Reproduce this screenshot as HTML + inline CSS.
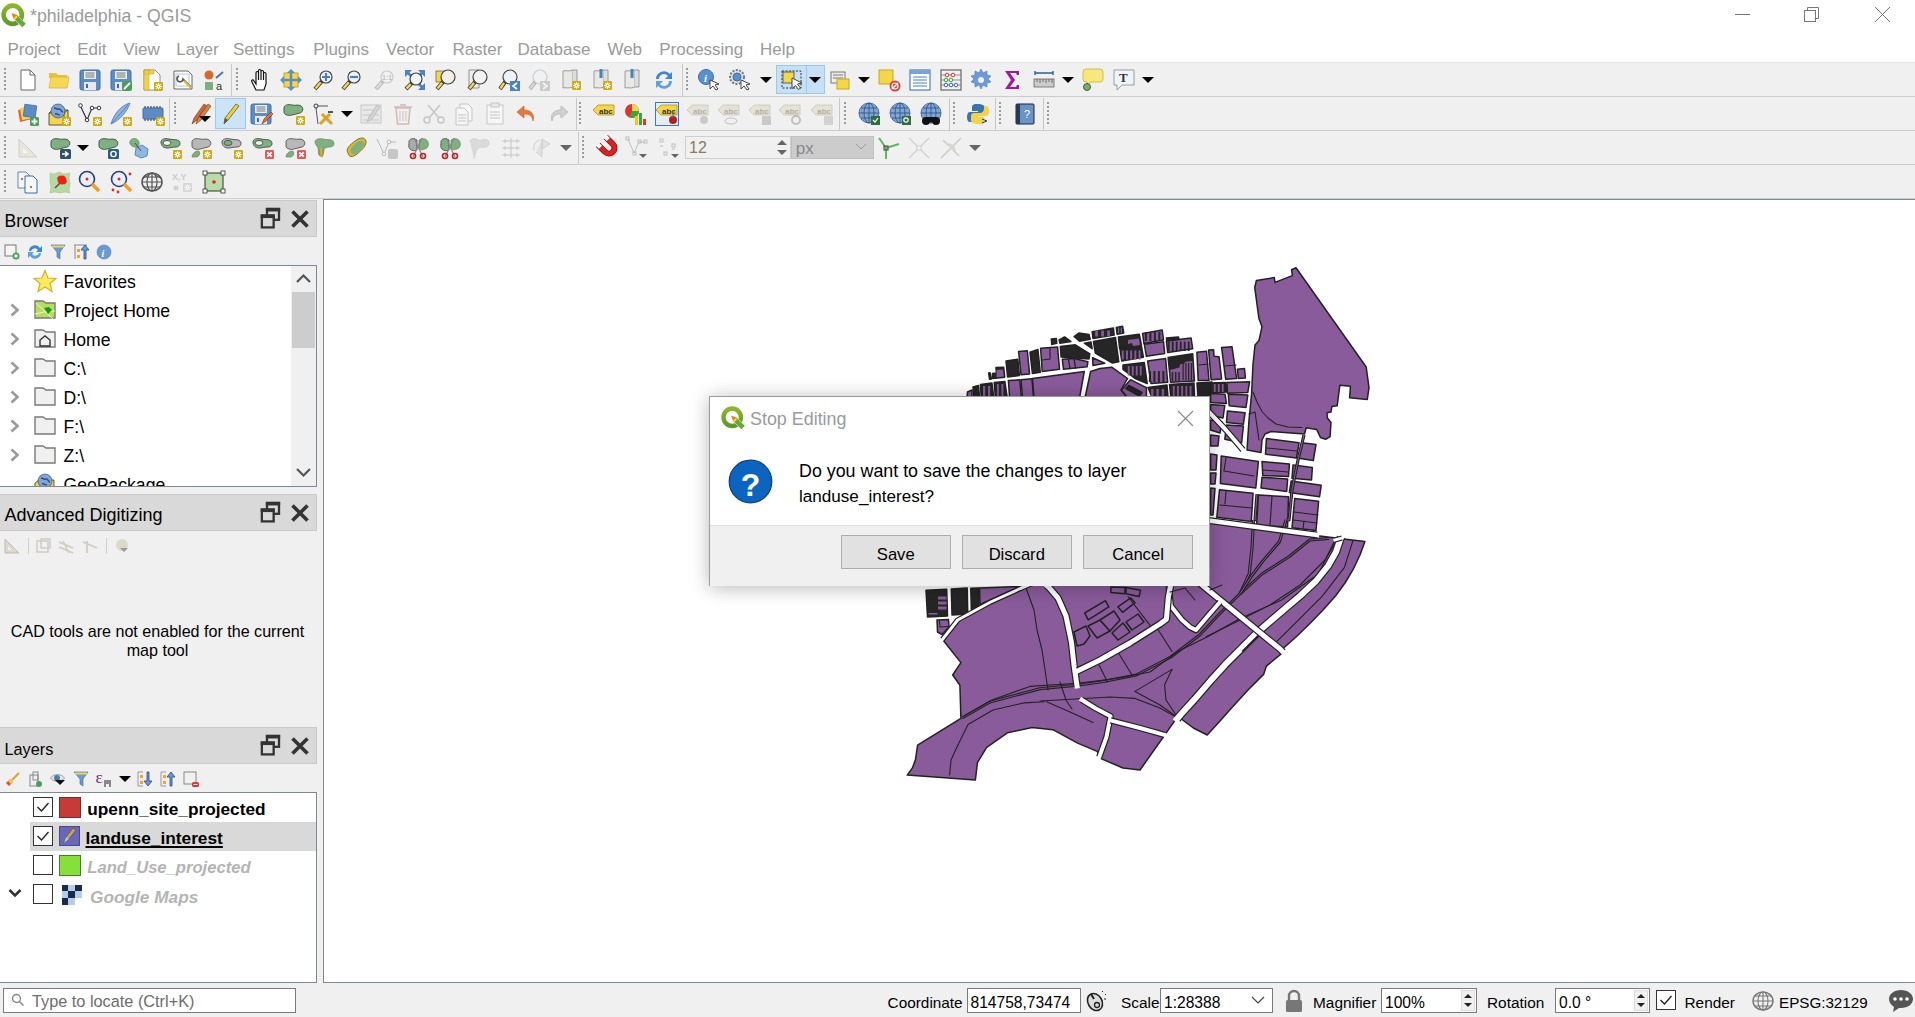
<!DOCTYPE html>
<html><head><meta charset="utf-8"><style>
html,body{margin:0;padding:0;width:1915px;height:1017px;overflow:hidden;background:#f0f0f0;font-family:"Liberation Sans", sans-serif}
.t{position:absolute;white-space:nowrap;font-family:"Liberation Sans", sans-serif}
svg{overflow:visible}
</style></head><body>
<div style="position:absolute;left:0px;top:0px;width:1915px;height:62px;background:#fff"></div><div style="position:absolute;left:0px;top:62px;width:1915px;height:1px;background:#e6e6e6"></div><svg style="position:absolute;left:1px;top:3px" width="24" height="24" viewBox="0 0 24 24"><defs><linearGradient id="qg" x1="0" y1="0" x2="0" y2="1"><stop offset="0" stop-color="#8db62a"/><stop offset="1" stop-color="#5c9a2c"/></linearGradient></defs><circle cx="11.7" cy="11.75" r="9.1" fill="none" stroke="url(#qg)" stroke-width="4.6"/><path d="M17.27 13.23L24.77 20.73L21.23 24.27L13.73 16.77z" fill="#6aa83c" stroke="#fff" stroke-width="1"/><path d="M17.27 13.23L24.77 20.73L21.23 24.27L13.73 16.77z" fill="#6aa83c"/><path d="M10.5 10L16.02 11.98L12.48 15.52z M16.02 11.98L17.5 13.2L13.8 16.9L12.48 15.52z" fill="#f07a1c"/><path d="M15.3 12.7L16.6 14L13.4 17.2L12.1 15.9z" fill="#f3e23c"/></svg><div class="t" style="left:30px;top:7.52px;font-size:17.7px;line-height:17.7px;color:#9a9a9a;">*philadelphia - QGIS</div><div style="position:absolute;left:1735px;top:14px;width:15px;height:1px;background:#777"></div><svg style="position:absolute;left:1803px;top:6px" width="17" height="17" viewBox="0 0 17 17"><rect x="1.5" y="4.5" width="11" height="11" fill="none" stroke="#777"/><path d="M4.5 4.5v-3h11v11h-3" fill="none" stroke="#777"/></svg><svg style="position:absolute;left:1874px;top:6px" width="17" height="17" viewBox="0 0 17 17"><path d="M1 1l15 15M16 1L1 16" stroke="#777" stroke-width="1"/></svg><div class="t menu" style="left:7.5px;top:40.61px;font-size:17px;line-height:17px;color:#9a9a9a">Project</div><div class="t menu" style="left:77.2px;top:40.61px;font-size:17px;line-height:17px;color:#9a9a9a">Edit</div><div class="t menu" style="left:123.3px;top:40.61px;font-size:17px;line-height:17px;color:#9a9a9a">View</div><div class="t menu" style="left:176.2px;top:40.61px;font-size:17px;line-height:17px;color:#9a9a9a">Layer</div><div class="t menu" style="left:233px;top:40.61px;font-size:17px;line-height:17px;color:#9a9a9a">Settings</div><div class="t menu" style="left:313.3px;top:40.61px;font-size:17px;line-height:17px;color:#9a9a9a">Plugins</div><div class="t menu" style="left:386px;top:40.61px;font-size:17px;line-height:17px;color:#9a9a9a">Vector</div><div class="t menu" style="left:452.4px;top:40.61px;font-size:17px;line-height:17px;color:#9a9a9a">Raster</div><div class="t menu" style="left:517.6px;top:40.61px;font-size:17px;line-height:17px;color:#9a9a9a">Database</div><div class="t menu" style="left:607.4px;top:40.61px;font-size:17px;line-height:17px;color:#9a9a9a">Web</div><div class="t menu" style="left:659.2px;top:40.61px;font-size:17px;line-height:17px;color:#9a9a9a">Processing</div><div class="t menu" style="left:760px;top:40.61px;font-size:17px;line-height:17px;color:#9a9a9a">Help</div><div style="position:absolute;left:0px;top:63px;width:1915px;height:136px;background:#f0f0f0"></div><div style="position:absolute;left:0px;top:96px;width:1915px;height:1px;background:#cbcbcb"></div><div style="position:absolute;left:0px;top:130px;width:1915px;height:1px;background:#cbcbcb"></div><div style="position:absolute;left:0px;top:164px;width:1915px;height:1px;background:#cbcbcb"></div><div style="position:absolute;left:0px;top:198px;width:1915px;height:1px;background:#d0d0d0"></div><div style="position:absolute;left:3.5px;top:68px;width:2px;height:24px;background:repeating-linear-gradient(#9a9a9a 0 2px, transparent 2px 4px)"></div><svg style="position:absolute;left:15.600000000000001px;top:68.0px" width="24" height="24" viewBox="0 0 24 24"><path d="M5 2h9l5 5v15H5z" fill="#fff" stroke="#666" stroke-width="1"/><path d="M14 2v5h5" fill="none" stroke="#666"/></svg><svg style="position:absolute;left:46.6px;top:68.0px" width="24" height="24" viewBox="0 0 24 24"><path d="M2 5h7l2 2h9v3H2z" fill="#e8c23a"/><path d="M2 20l2-11h18l-2 11z" fill="#f7d854" stroke="#d9b530" stroke-width="0.8"/></svg><svg style="position:absolute;left:77.9px;top:68.0px" width="24" height="24" viewBox="0 0 24 24"><rect x="2" y="2" width="20" height="20" rx="2" fill="#5b8cc8" stroke="#3f6ea6"/><rect x="6" y="3" width="12" height="8" fill="#eef0f3"/><path d="M7.5 5h9M7.5 7h9M7.5 9h9" stroke="#555" stroke-width="0.8"/><rect x="6" y="14" width="12" height="8" fill="#e6e9ee"/><rect x="8" y="16" width="2" height="4" fill="#3f6ea6"/></svg><svg style="position:absolute;left:109.2px;top:68.0px" width="24" height="24" viewBox="0 0 24 24"><rect x="2" y="2" width="20" height="20" rx="2" fill="#5b8cc8" stroke="#3f6ea6"/><rect x="6" y="3" width="12" height="8" fill="#eef0f3"/><path d="M7.5 5h9M7.5 7h9M7.5 9h9" stroke="#555" stroke-width="0.8"/><rect x="6" y="14" width="12" height="8" fill="#e6e9ee"/><rect x="8" y="16" width="2" height="4" fill="#3f6ea6"/><rect x="13" y="13" width="10" height="10" rx="2" fill="#4e9a5a"/><path d="M15 21l6-6" stroke="#fff" stroke-width="1.8"/></svg><svg style="position:absolute;left:140.0px;top:68.0px" width="24" height="24" viewBox="0 0 24 24"><path d="M4 2h11l5 5v15H4z" fill="#fff" stroke="#777" stroke-width="0.8"/><path d="M4 2h5v20H4zM4 2h10v4H4z" fill="#f3d04a" stroke="#c9a81a" stroke-width="0.6"/><rect x="14" y="14" width="9" height="9" rx="1.2" fill="#d4a90f"/><path d="M18.5 15.2V21.8M15.2 18.5H21.8M16.2 16.2L20.8 20.8M20.8 16.2L16.2 20.8" stroke="#fff" stroke-width="1.1"/><circle cx="18.5" cy="18.5" r="1.9" fill="#fff"/><circle cx="18.5" cy="18.5" r="0.8" fill="#d4a90f"/></svg><svg style="position:absolute;left:171.3px;top:68.0px" width="24" height="24" viewBox="0 0 24 24"><path d="M3 3h14l4 4v14H3z" fill="#fff" stroke="#555" stroke-width="0.9"/><rect x="5" y="6" width="13" height="12" fill="none" stroke="#9bb4e8" stroke-width="0.8"/><path d="M8 8a3 3 0 1 0 4 3l8 8" stroke="#555" stroke-width="1.6" fill="none"/><path d="M13 13l7 7" stroke="#e0c040" stroke-width="2.2"/></svg><svg style="position:absolute;left:202.0px;top:68.0px" width="24" height="24" viewBox="0 0 24 24"><circle cx="7" cy="7" r="4.5" fill="#d9672e"/><path d="M14 10l7-6" stroke="#4a76b8" stroke-width="2"/><rect x="3" y="14" width="8" height="8" fill="#79b07e"/><text x="14" y="22" font-family="Liberation Sans" font-size="11" fill="#333">a</text></svg><div style="position:absolute;left:231px;top:64px;width:1px;height:32px;background:#c8c8c8"></div><div style="position:absolute;left:236px;top:68px;width:2px;height:24px;background:repeating-linear-gradient(#9a9a9a 0 2px, transparent 2px 4px)"></div><svg style="position:absolute;left:249.0px;top:68.0px" width="24" height="24" viewBox="0 0 24 24"><path d="M7 22l-4-8c-1-2 1-3 2-1l2 3V5c0-2 2.5-2 2.5 0v7V3c0-2 2.5-2 2.5 0v9V4c0-2 2.5-2 2.5 0v8V6c0-2 2.5-2 2.5 0v10l-2 6z" fill="#fff" stroke="#111" stroke-width="1.2"/></svg><svg style="position:absolute;left:279.4px;top:68.0px" width="24" height="24" viewBox="0 0 24 24"><rect x="5" y="5" width="14" height="14" fill="#f5d64a" stroke="#c9a81a"/><path d="M12 1l4 4h-8zM12 23l4-4h-8zM1 12l4-4v8zM23 12l-4-4v8z" fill="#5b8fc7"/><path d="M12 4v16M4 12h16" stroke="#5b8fc7" stroke-width="2.5"/></svg><svg style="position:absolute;left:312.0px;top:68.0px" width="24" height="24" viewBox="0 0 24 24"><path d="M9.8 13.2L3 21" stroke="#333" stroke-width="4"/><path d="M8.8 14.2L3.5 20.5" stroke="#f5d64a" stroke-width="2.5"/><circle cx="14" cy="9" r="6" fill="#eef3f8" stroke="#444" stroke-width="1.2"/><path d="M14 5v8M10 9h8" stroke="#4a7fc1" stroke-width="2.2"/></svg><svg style="position:absolute;left:340.4px;top:68.0px" width="24" height="24" viewBox="0 0 24 24"><path d="M9.8 13.2L3 21" stroke="#333" stroke-width="4"/><path d="M8.8 14.2L3.5 20.5" stroke="#f5d64a" stroke-width="2.5"/><circle cx="14" cy="9" r="6" fill="#eef3f8" stroke="#444" stroke-width="1.2"/><path d="M10 9h8" stroke="#4a7fc1" stroke-width="2.2"/></svg><svg style="position:absolute;left:373.0px;top:68.0px" width="24" height="24" viewBox="0 0 24 24"><g opacity="0.35"><path d="M9.8 13.2L3 21" stroke="#333" stroke-width="4"/><path d="M8.8 14.2L3.5 20.5" stroke="#bbb" stroke-width="2.5"/><circle cx="14" cy="9" r="6" fill="#eef3f8" stroke="#888" stroke-width="1.2"/><text x="9" y="12" font-family="Liberation Sans" font-size="7" font-weight="bold" fill="#666">1:1</text></g></svg><svg style="position:absolute;left:403.0px;top:68.0px" width="24" height="24" viewBox="0 0 24 24"><path d="M2 2h7L2 9zM22 2h-7l7 7zM22 22h-7l7-7z" fill="#4a82c6"/><path d="M3 3l5 5M21 3l-5 5M21 21l-5-5" stroke="#4a82c6" stroke-width="2.5"/><path d="M8.8 15.2L3 21" stroke="#333" stroke-width="4"/><path d="M7.800000000000001 16.2L3.5 20.5" stroke="#f5d64a" stroke-width="2.5"/><circle cx="13" cy="11" r="6" fill="#eef3f8" stroke="#444" stroke-width="1.2"/></svg><svg style="position:absolute;left:434.4px;top:68.0px" width="24" height="24" viewBox="0 0 24 24"><rect x="2" y="3" width="10" height="11" fill="#f5d64a" stroke="#444" stroke-width="0.6"/><path d="M9.100000000000001 13.899999999999999L3 21" stroke="#333" stroke-width="4"/><path d="M8.100000000000001 14.899999999999999L3.5 20.5" stroke="#f5d64a" stroke-width="2.5"/><circle cx="14" cy="9" r="7" fill="#f1efe4" stroke="#444" stroke-width="1.2"/></svg><svg style="position:absolute;left:465.8px;top:68.0px" width="24" height="24" viewBox="0 0 24 24"><path d="M3 2h10v18H3z" fill="#eee" stroke="#777" stroke-width="0.8"/><path d="M9.100000000000001 13.899999999999999L3 21" stroke="#333" stroke-width="4"/><path d="M8.100000000000001 14.899999999999999L3.5 20.5" stroke="#f5d64a" stroke-width="2.5"/><circle cx="14" cy="9" r="7" fill="#f3f3f3" stroke="#444" stroke-width="1.2"/></svg><svg style="position:absolute;left:497.0px;top:68.0px" width="24" height="24" viewBox="0 0 24 24"><path d="M8.100000000000001 13.899999999999999L3 21" stroke="#333" stroke-width="4"/><path d="M7.100000000000001 14.899999999999999L3.5 20.5" stroke="#f5d64a" stroke-width="2.5"/><circle cx="13" cy="9" r="7" fill="#eef3f8" stroke="#444" stroke-width="1.2"/><rect x="13" y="13" width="10" height="10" fill="#4a82c6"/><path d="M20 15l-4 3 4 3" stroke="#fff" stroke-width="1.6" fill="none"/></svg><svg style="position:absolute;left:526.8px;top:68.0px" width="24" height="24" viewBox="0 0 24 24"><g opacity="0.35"><path d="M8.100000000000001 13.899999999999999L3 21" stroke="#333" stroke-width="4"/><path d="M7.100000000000001 14.899999999999999L3.5 20.5" stroke="#aaa" stroke-width="2.5"/><circle cx="13" cy="9" r="7" fill="#eef3f8" stroke="#888" stroke-width="1.2"/><rect x="13" y="13" width="10" height="10" fill="#888"/><path d="M16 15l4 3-4 3" stroke="#fff" stroke-width="1.6" fill="none"/></g></svg><svg style="position:absolute;left:559.0px;top:68.0px" width="24" height="24" viewBox="0 0 24 24"><path d="M4 3c3-1 5 1 10-1v17c-5 2-7 0-10 1z" fill="#e8e8e4" stroke="#888" stroke-width="0.8"/><path d="M14 2h4v17h-4" fill="#ddd" stroke="#888" stroke-width="0.8"/><rect x="13" y="13" width="9" height="9" rx="1.2" fill="#d4a90f"/><path d="M17.5 14.2V20.8M14.2 17.5H20.8M15.2 15.2L19.8 19.8M19.8 15.2L15.2 19.8" stroke="#fff" stroke-width="1.1"/><circle cx="17.5" cy="17.5" r="1.9" fill="#fff"/><circle cx="17.5" cy="17.5" r="0.8" fill="#d4a90f"/></svg><svg style="position:absolute;left:590.3px;top:68.0px" width="24" height="24" viewBox="0 0 24 24"><path d="M4 3c3-1 5 1 10-1v17c-5 2-7 0-10 1z" fill="#e8e8e4" stroke="#888" stroke-width="0.8"/><path d="M14 2h4v17h-4" fill="#ddd" stroke="#888" stroke-width="0.8"/><path d="M11 1v9" stroke="#4a7fc1" stroke-width="3"/><rect x="13" y="13" width="9" height="9" rx="1.2" fill="#d4a90f"/><path d="M17.5 14.2V20.8M14.2 17.5H20.8M15.2 15.2L19.8 19.8M19.8 15.2L15.2 19.8" stroke="#fff" stroke-width="1.1"/><circle cx="17.5" cy="17.5" r="1.9" fill="#fff"/><circle cx="17.5" cy="17.5" r="0.8" fill="#d4a90f"/></svg><svg style="position:absolute;left:620.7px;top:68.0px" width="24" height="24" viewBox="0 0 24 24"><path d="M4 3c3-1 5 1 10-1v17c-5 2-7 0-10 1z" fill="#e8e8e4" stroke="#888" stroke-width="0.8"/><path d="M14 2h4v17h-4" fill="#ddd" stroke="#888" stroke-width="0.8"/><path d="M11 1v9" stroke="#4a7fc1" stroke-width="3"/></svg><svg style="position:absolute;left:652.0px;top:68.0px" width="24" height="24" viewBox="0 0 24 24"><path d="M4 11a8 8 0 0 1 14-5l2-2v7h-7l3-3a5 5 0 0 0-9 3z" fill="#3f86d0"/><path d="M20 13a8 8 0 0 1-14 5l-2 2v-7h7l-3 3a5 5 0 0 0 9-3z" fill="#5fa0e0"/></svg><div style="position:absolute;left:681.6px;top:64px;width:1px;height:32px;background:#c8c8c8"></div><div style="position:absolute;left:686px;top:68px;width:2px;height:24px;background:repeating-linear-gradient(#9a9a9a 0 2px, transparent 2px 4px)"></div><div style="position:absolute;left:776px;top:65px;width:49px;height:29px;background:#c6e0f5;border:1px solid #99c9ef;box-sizing:border-box"></div><div style="position:absolute;left:806px;top:66px;width:1px;height:27px;background:#99c9ef"></div><svg style="position:absolute;left:696.8px;top:68.0px" width="24" height="24" viewBox="0 0 24 24"><circle cx="9" cy="9" r="7.5" fill="#5a8fd0" stroke="#3a6fb0"/><text x="7" y="13.5" font-family="Liberation Serif" font-style="italic" font-weight="bold" font-size="11" fill="#fff">i</text><path d="M13 12l9 4-4 1 3 4-2 1-3-4-3 3z" fill="#fff" stroke="#333" stroke-width="0.9"/></svg><svg style="position:absolute;left:728.0px;top:68.0px" width="24" height="24" viewBox="0 0 24 24"><circle cx="9" cy="9" r="7" fill="#ddd" stroke="#777" stroke-width="2" stroke-dasharray="2 1.5"/><circle cx="9" cy="9" r="4" fill="#5a8fd0" stroke="#3a6fb0"/><path d="M13 12l9 4-4 1 3 4-2 1-3-4-3 3z" fill="#fff" stroke="#333" stroke-width="0.9"/></svg><svg style="position:absolute;left:779.8px;top:68.0px" width="24" height="24" viewBox="0 0 24 24"><rect x="2" y="3" width="19" height="17" fill="none" stroke="#333" stroke-width="1" stroke-dasharray="2 1.5"/><rect x="3" y="4" width="11" height="11" fill="#f5d64a" stroke="#555" stroke-width="0.9"/><path d="M12 10l10 5-4.5 1 3 4-2 1.5-3-4-3.5 3z" fill="#fff" stroke="#333" stroke-width="0.9"/></svg><svg style="position:absolute;left:827.8px;top:68.0px" width="24" height="24" viewBox="0 0 24 24"><rect x="3" y="4" width="14" height="11" fill="#eee" stroke="#777"/><path d="M5 7h10M5 10h10" stroke="#777"/><rect x="9" y="11" width="12" height="10" fill="#f5d64a" stroke="#c9a81a"/></svg><svg style="position:absolute;left:877.0px;top:68.0px" width="24" height="24" viewBox="0 0 24 24"><rect x="2" y="2" width="14" height="14" fill="#f5d64a" stroke="#c9a81a"/><circle cx="18" cy="18" r="5.5" fill="#e03c3c"/><path d="M15 21l6-6" stroke="#fff" stroke-width="1.5"/><circle cx="18" cy="18" r="3" fill="none" stroke="#fff" stroke-width="1.2"/></svg><svg style="position:absolute;left:907.6px;top:68.0px" width="24" height="24" viewBox="0 0 24 24"><rect x="2" y="2" width="20" height="20" fill="#fff" stroke="#4a7fc1" stroke-width="1.2"/><rect x="2" y="2" width="20" height="4" fill="#7aa4d8"/><path d="M5 9h14M5 12h14M5 15h14M5 18h14" stroke="#4a7fc1" stroke-width="1"/></svg><svg style="position:absolute;left:939.0px;top:68.0px" width="24" height="24" viewBox="0 0 24 24"><rect x="2" y="2" width="20" height="20" fill="none" stroke="#666" stroke-width="1.2"/><path d="M2 7h20M2 12h20M2 17h20" stroke="#777" stroke-width="0.8"/><circle cx="8" cy="7" r="1.8" fill="#fff" stroke="#d33"/><circle cx="14" cy="7" r="1.8" fill="#fff" stroke="#d33"/><circle cx="7" cy="12" r="1.8" fill="#fff" stroke="#3a3"/><circle cx="12" cy="12" r="1.8" fill="#fff" stroke="#3a3"/><circle cx="7" cy="17" r="1.8" fill="#fff" stroke="#36c"/><circle cx="12" cy="17" r="1.8" fill="#fff" stroke="#36c"/><circle cx="17" cy="17" r="1.8" fill="#fff" stroke="#36c"/></svg><svg style="position:absolute;left:969.4px;top:68.0px" width="24" height="24" viewBox="0 0 24 24"><path d="M12 1l2 4 4-2 0 4 4 1-3 3 3 3-4 1v4l-4-2-2 4-2-4-4 2v-4l-4-1 3-3-3-3 4-1V3l4 2z" fill="#6c9ad6" stroke="#4a7ab8" stroke-width="0.6"/><circle cx="12" cy="12" r="3" fill="#f0f0f0"/></svg><svg style="position:absolute;left:1000.0px;top:68.0px" width="24" height="24" viewBox="0 0 24 24"><path d="M5 3h14v4h-2l-1-2H10l5 7-5 7h6l1-2h2v4H5l6-9z" fill="#a01aa6"/></svg><svg style="position:absolute;left:1032.0px;top:68.0px" width="24" height="24" viewBox="0 0 24 24"><path d="M3 5h18M3 3v4M21 3v4" stroke="#2f5f8f" stroke-width="1.4"/><rect x="2" y="11" width="20" height="8" fill="#ccc" stroke="#666" stroke-width="0.8"/><path d="M5 11v3M8 11v4M11 11v3M14 11v4M17 11v3M20 11v4" stroke="#555" stroke-width="0.8"/></svg><svg style="position:absolute;left:1080.6px;top:68.0px" width="24" height="24" viewBox="0 0 24 24"><path d="M2 4a3 3 0 0 1 3-3h14a3 3 0 0 1 3 3v7a3 3 0 0 1-3 3H10l-4 4v-4H5a3 3 0 0 1-3-3z" fill="#f8e77a" stroke="#c9b030" stroke-width="0.8"/><circle cx="6" cy="19" r="3.5" fill="#7aad6f" stroke="#3a6a30"/></svg><svg style="position:absolute;left:1112.0px;top:68.0px" width="24" height="24" viewBox="0 0 24 24"><path d="M2 2h20v15H10l-5 5v-5H2z" fill="#eef4f8" stroke="#888" stroke-width="0.8"/><text x="7" y="14" font-family="Liberation Serif" font-weight="bold" font-size="13" fill="#333">T</text></svg><svg style="position:absolute;left:760px;top:76px" width="12" height="8"><path d="M0 1h12L6 7z" fill="#000"/></svg><svg style="position:absolute;left:809.3px;top:76px" width="12" height="8"><path d="M0 1h12L6 7z" fill="#000"/></svg><svg style="position:absolute;left:858px;top:76px" width="12" height="8"><path d="M0 1h12L6 7z" fill="#000"/></svg><svg style="position:absolute;left:1062px;top:76px" width="12" height="8"><path d="M0 1h12L6 7z" fill="#000"/></svg><svg style="position:absolute;left:1142.3px;top:76px" width="12" height="8"><path d="M0 1h12L6 7z" fill="#000"/></svg><div style="position:absolute;left:3.5px;top:102px;width:2px;height:24px;background:repeating-linear-gradient(#9a9a9a 0 2px, transparent 2px 4px)"></div><svg style="position:absolute;left:16.2px;top:102.0px" width="24" height="24" viewBox="0 0 24 24"><path d="M2 8l12-3 2 12-12 3z" fill="#d9672e"/><path d="M4 6l12-2 2 12-12 2z" fill="#f5d64a"/><path d="M8 3l12 0v12H8z" fill="#5b8cc8" stroke="#3f6ea6" stroke-width="0.8" transform="rotate(8 14 9)"/><rect x="14" y="15" width="9" height="9" rx="1.5" fill="#4e9a5a"/><path d="M18.5 16.5v6M15.5 19.5h6" stroke="#fff" stroke-width="1.8"/></svg><svg style="position:absolute;left:46.9px;top:102.0px" width="24" height="24" viewBox="0 0 24 24"><path d="M2 11l4-3h15v12l-4 3H2z" fill="#f5d64a" stroke="#333" stroke-width="0.8"/><path d="M2 11h15v12" fill="none" stroke="#333" stroke-width="0.8"/><path d="M17 11l4-3" stroke="#333" stroke-width="0.8"/><circle cx="11" cy="9" r="7" fill="#7ea6d6" stroke="#335" stroke-width="0.6"/><path d="M7 6c2 0 3 2 5 1s2 3 4 3M8 12c2-1 3 1 5 1" stroke="#2f4f7f" stroke-width="1.4" fill="none"/><rect x="15" y="15" width="9" height="9" rx="1.2" fill="#d4a90f"/><path d="M19.5 16.2V22.8M16.2 19.5H22.8M17.2 17.2L21.8 21.8M21.8 17.2L17.2 21.8" stroke="#fff" stroke-width="1.1"/><circle cx="19.5" cy="19.5" r="1.9" fill="#fff"/><circle cx="19.5" cy="19.5" r="0.8" fill="#d4a90f"/></svg><svg style="position:absolute;left:78.0px;top:102.0px" width="24" height="24" viewBox="0 0 24 24"><path d="M2 3l7 15 5-12 7 0" fill="none" stroke="#334" stroke-width="1.2"/><circle cx="2.5" cy="3.5" r="1.8" fill="#fff" stroke="#334"/><circle cx="9" cy="18" r="1.8" fill="#fff" stroke="#334"/><circle cx="14" cy="6" r="1.8" fill="#fff" stroke="#334"/><circle cx="21" cy="6" r="1.8" fill="#fff" stroke="#334"/><rect x="15" y="15" width="9" height="9" rx="1.2" fill="#d4a90f"/><path d="M19.5 16.2V22.8M16.2 19.5H22.8M17.2 17.2L21.8 21.8M21.8 17.2L17.2 21.8" stroke="#fff" stroke-width="1.1"/><circle cx="19.5" cy="19.5" r="1.9" fill="#fff"/><circle cx="19.5" cy="19.5" r="0.8" fill="#d4a90f"/></svg><svg style="position:absolute;left:108.0px;top:102.0px" width="24" height="24" viewBox="0 0 24 24"><path d="M3 22C6 12 12 4 22 1 19 10 12 18 3 22z" fill="#8fb3e0" stroke="#4a76b8" stroke-width="0.8"/><path d="M3 22L20 3" stroke="#4a76b8" stroke-width="0.8"/><rect x="15" y="15" width="9" height="9" rx="1.2" fill="#d4a90f"/><path d="M19.5 16.2V22.8M16.2 19.5H22.8M17.2 17.2L21.8 21.8M21.8 17.2L17.2 21.8" stroke="#fff" stroke-width="1.1"/><circle cx="19.5" cy="19.5" r="1.9" fill="#fff"/><circle cx="19.5" cy="19.5" r="0.8" fill="#d4a90f"/></svg><svg style="position:absolute;left:140.9px;top:102.0px" width="24" height="24" viewBox="0 0 24 24"><rect x="2" y="6" width="20" height="11" rx="1" fill="#5b8cc8" stroke="#3f6ea6"/><path d="M4 4v2M7 4v2M10 4v2M13 4v2M16 4v2M19 4v2M4 17v2M7 17v2M10 17v2M13 17v2M16 17v2M19 17v2" stroke="#333" stroke-width="1"/><rect x="15" y="15" width="9" height="9" rx="1.2" fill="#d4a90f"/><path d="M19.5 16.2V22.8M16.2 19.5H22.8M17.2 17.2L21.8 21.8M21.8 17.2L17.2 21.8" stroke="#fff" stroke-width="1.1"/><circle cx="19.5" cy="19.5" r="1.9" fill="#fff"/><circle cx="19.5" cy="19.5" r="0.8" fill="#d4a90f"/></svg><div style="position:absolute;left:169.2px;top:98px;width:1px;height:32px;background:#c8c8c8"></div><div style="position:absolute;left:174px;top:102px;width:2px;height:24px;background:repeating-linear-gradient(#9a9a9a 0 2px, transparent 2px 4px)"></div><div style="position:absolute;left:215px;top:98px;width:31px;height:31px;background:#cce4f7;border:1px solid #99c9ef;box-sizing:border-box"></div><svg style="position:absolute;left:187.6px;top:102.0px" width="24" height="24" viewBox="0 0 24 24"><path d="M4 22l2-6 10-14 3 2-10 14z" fill="#c96a3a" stroke="#6a3a1a" stroke-width="0.6"/><path d="M8 22l2-6 10-14 3 2-10 14z" fill="#e08040" stroke="#6a3a1a" stroke-width="0.6"/></svg><svg style="position:absolute;left:218.3px;top:102.0px" width="24" height="24" viewBox="0 0 24 24"><path d="M6 22l1-6 11-14 3 2-11 14z" fill="#f0cf40" stroke="#6a5a1a" stroke-width="0.8"/><path d="M6 22l1-6 3 2z" fill="#555"/></svg><svg style="position:absolute;left:249.0px;top:102.0px" width="24" height="24" viewBox="0 0 24 24"><rect x="2" y="2" width="20" height="20" rx="2" fill="#5b8cc8" stroke="#3f6ea6"/><rect x="6" y="3" width="12" height="8" fill="#eef0f3"/><path d="M7.5 5h9M7.5 7h9M7.5 9h9" stroke="#555" stroke-width="0.8"/><rect x="6" y="14" width="12" height="8" fill="#e6e9ee"/><rect x="8" y="16" width="2" height="4" fill="#3f6ea6"/><path d="M13 22l2-5 7-7 2 2-7 7z" fill="#e07030" stroke="#633" stroke-width="0.6"/></svg><svg style="position:absolute;left:280.9px;top:102.0px" width="24" height="24" viewBox="0 0 24 24"><path d="M3 6c0-3 4-4 8-3s6-1 9 1 2 6-1 7-5 1-8 2-8 0-8-3z" fill="#7fb07f" stroke="#4a5a4a" stroke-width="1" /><rect x="15" y="14" width="9" height="9" rx="1.2" fill="#d4a90f"/><path d="M19.5 15.2V21.8M16.2 18.5H22.8M17.2 16.2L21.8 20.8M21.8 16.2L17.2 20.8" stroke="#fff" stroke-width="1.1"/><circle cx="19.5" cy="18.5" r="1.9" fill="#fff"/><circle cx="19.5" cy="18.5" r="0.8" fill="#d4a90f"/></svg><svg style="position:absolute;left:310.7px;top:102.0px" width="24" height="24" viewBox="0 0 24 24"><circle cx="5" cy="4" r="2" fill="none" stroke="#333"/><path d="M7 4h10M5 6l2 16" stroke="#555" stroke-width="1"/><path d="M9 22l10-10M11 12l10 10" stroke="#e0a020" stroke-width="3"/><path d="M17 10h5" stroke="#555" stroke-width="2"/></svg><svg style="position:absolute;left:359.2px;top:102.0px" width="24" height="24" viewBox="0 0 24 24"><g opacity="0.4"><rect x="2" y="3" width="20" height="18" fill="#ddd" stroke="#888"/><path d="M4 8h16M4 13h16M4 18h16" stroke="#888"/><path d="M8 20l2-5 8-12 3 2-8 12z" fill="#aaa" stroke="#777"/></g></svg><svg style="position:absolute;left:390.6px;top:102.0px" width="24" height="24" viewBox="0 0 24 24"><g opacity="0.4"><path d="M5 6h14l-1.5 16h-11z" fill="none" stroke="#a66" stroke-width="1.5"/><path d="M3 5h18M9 3h6" stroke="#a66" stroke-width="1.5"/><path d="M9 9v10M12 9v10M15 9v10" stroke="#a66"/></g></svg><svg style="position:absolute;left:421.9px;top:102.0px" width="24" height="24" viewBox="0 0 24 24"><g opacity="0.4"><circle cx="5" cy="18" r="3" fill="none" stroke="#888" stroke-width="1.5"/><circle cx="19" cy="18" r="3" fill="none" stroke="#888" stroke-width="1.5"/><path d="M7 16L18 3M17 16L6 3" stroke="#888" stroke-width="1.5"/></g></svg><svg style="position:absolute;left:451.7px;top:102.0px" width="24" height="24" viewBox="0 0 24 24"><g opacity="0.4"><path d="M8 2h8l4 4v13H8z" fill="#fff" stroke="#888"/><path d="M4 6h8l4 4v13H4z" fill="#fff" stroke="#888"/><path d="M6 13h8M6 16h8M6 19h8" stroke="#888"/></g></svg><svg style="position:absolute;left:483.0px;top:102.0px" width="24" height="24" viewBox="0 0 24 24"><g opacity="0.4"><rect x="4" y="3" width="16" height="19" fill="#fff" stroke="#888"/><rect x="8" y="1" width="8" height="4" fill="#ddd" stroke="#888"/><path d="M7 10h10M7 13h10M7 16h10" stroke="#888"/></g></svg><svg style="position:absolute;left:515.0px;top:102.0px" width="24" height="24" viewBox="0 0 24 24"><path d="M9 4L2 10l7 6v-4c5 0 8 1 9 7 2-7-2-11-9-11z" fill="#e8793a" stroke="#b85a20" stroke-width="0.6"/></svg><svg style="position:absolute;left:545.6px;top:102.0px" width="24" height="24" viewBox="0 0 24 24"><g opacity="0.35"><path d="M15 4l7 6-7 6v-4c-5 0-8 1-9 7-2-7 2-11 9-11z" fill="#999" stroke="#555" stroke-width="0.9"/></g></svg><svg style="position:absolute;left:199px;top:115px" width="12" height="8"><path d="M0 1h12L6 7z" fill="#000"/></svg><svg style="position:absolute;left:341px;top:110px" width="12" height="8"><path d="M0 1h12L6 7z" fill="#000"/></svg><div style="position:absolute;left:575.7px;top:98px;width:1px;height:32px;background:#c8c8c8"></div><div style="position:absolute;left:579.4px;top:102px;width:2px;height:24px;background:repeating-linear-gradient(#9a9a9a 0 2px, transparent 2px 4px)"></div><svg style="position:absolute;left:591.9px;top:102.0px" width="24" height="24" viewBox="0 0 24 24"><g><path d="M1 8l5-5h16v10H6z" fill="#f5d64a" stroke="#b09020" stroke-width="0.8"/><text x="7" y="11.5" font-family="Liberation Sans" font-weight="bold" font-size="8" fill="#333">abc</text></g></svg><svg style="position:absolute;left:623.2px;top:102.0px" width="24" height="24" viewBox="0 0 24 24"><circle cx="9" cy="9" r="7" fill="#d33"/><path d="M9 9V2a7 7 0 0 1 7 7z" fill="#f5d64a"/><path d="M9 9h7a7 7 0 0 1-10 6z" fill="#3a3"/><rect x="12" y="14" width="3" height="9" fill="#f5c030"/><rect x="16" y="11" width="3" height="12" fill="#3a3"/><rect x="20" y="17" width="3" height="6" fill="#d33"/></svg><svg style="position:absolute;left:654.5px;top:102.0px" width="24" height="24" viewBox="0 0 24 24"><rect x="0.5" y="0.5" width="23" height="23" fill="#e5eef8" stroke="#3a78d8" stroke-width="1"/><g><path d="M1 8l5-5h16v10H6z" fill="#f5d64a" stroke="#b09020" stroke-width="0.8"/><text x="7" y="11.5" font-family="Liberation Sans" font-weight="bold" font-size="8" fill="#333">abc</text><circle cx="18" cy="18" r="4" fill="#b02020"/><path d="M18 8v8" stroke="#666"/></g></svg><svg style="position:absolute;left:685.8px;top:102.0px" width="24" height="24" viewBox="0 0 24 24"><g><path d="M1 8l5-5h16v10H6z" fill="#e4e2d8" stroke="#c8c6b8" stroke-width="0.8"/><text x="7" y="11.5" font-family="Liberation Sans" font-weight="bold" font-size="8" fill="#b0b0a8">abc</text><g opacity="0.45"><circle cx="18" cy="18" r="4" fill="#999"/></g></g></svg><svg style="position:absolute;left:717.2px;top:102.0px" width="24" height="24" viewBox="0 0 24 24"><g><path d="M1 8l5-5h16v10H6z" fill="#e4e2d8" stroke="#c8c6b8" stroke-width="0.8"/><text x="7" y="11.5" font-family="Liberation Sans" font-weight="bold" font-size="8" fill="#b0b0a8">abc</text><g opacity="0.45"><ellipse cx="14" cy="19" rx="6" ry="3" fill="none" stroke="#888"/></g></g></svg><svg style="position:absolute;left:747.6px;top:102.0px" width="24" height="24" viewBox="0 0 24 24"><g><path d="M1 8l5-5h16v10H6z" fill="#e4e2d8" stroke="#c8c6b8" stroke-width="0.8"/><text x="7" y="11.5" font-family="Liberation Sans" font-weight="bold" font-size="8" fill="#b0b0a8">abc</text><g opacity="0.45"><rect x="14" y="14" width="9" height="9" fill="#999"/></g></g></svg><svg style="position:absolute;left:778.3px;top:102.0px" width="24" height="24" viewBox="0 0 24 24"><g><path d="M1 8l5-5h16v10H6z" fill="#e4e2d8" stroke="#c8c6b8" stroke-width="0.8"/><text x="7" y="11.5" font-family="Liberation Sans" font-weight="bold" font-size="8" fill="#b0b0a8">abc</text><g opacity="0.45"><circle cx="18" cy="18" r="4" fill="none" stroke="#888" stroke-width="2"/></g></g></svg><svg style="position:absolute;left:809.6px;top:102.0px" width="24" height="24" viewBox="0 0 24 24"><g><path d="M1 8l5-5h16v10H6z" fill="#e4e2d8" stroke="#c8c6b8" stroke-width="0.8"/><text x="7" y="11.5" font-family="Liberation Sans" font-weight="bold" font-size="8" fill="#b0b0a8">abc</text><g opacity="0.45"><rect x="14" y="14" width="9" height="9" fill="#aaa"/></g></g></svg><div style="position:absolute;left:838.8px;top:98px;width:1px;height:32px;background:#c8c8c8"></div><div style="position:absolute;left:844px;top:102px;width:2px;height:24px;background:repeating-linear-gradient(#9a9a9a 0 2px, transparent 2px 4px)"></div><svg style="position:absolute;left:856.6px;top:102.0px" width="24" height="24" viewBox="0 0 24 24"><circle cx="12" cy="11" r="10" fill="#7ea6d6" stroke="#3a5a8a" stroke-width="0.8"/><path d="M2 11h20M12 1v20M4 6h16M4 16h16" stroke="#2f4f7f" stroke-width="0.8" fill="none"/><ellipse cx="12" cy="11" rx="5" ry="10" fill="none" stroke="#2f4f7f" stroke-width="0.8"/><rect x="14" y="14" width="9" height="9" fill="#2e6e3e"/><path d="M16 18l2 2 3-4" stroke="#fff" fill="none" stroke-width="1.2"/></svg><svg style="position:absolute;left:888.0px;top:102.0px" width="24" height="24" viewBox="0 0 24 24"><circle cx="12" cy="11" r="10" fill="#7ea6d6" stroke="#3a5a8a" stroke-width="0.8"/><path d="M2 11h20M12 1v20M4 6h16M4 16h16" stroke="#2f4f7f" stroke-width="0.8" fill="none"/><ellipse cx="12" cy="11" rx="5" ry="10" fill="none" stroke="#2f4f7f" stroke-width="0.8"/><rect x="14" y="14" width="9" height="9" fill="#2e6e3e"/><circle cx="18" cy="18" r="2.2" fill="none" stroke="#fff" stroke-width="1.2"/></svg><svg style="position:absolute;left:919.2px;top:102.0px" width="24" height="24" viewBox="0 0 24 24"><circle cx="12" cy="11" r="10" fill="#7ea6d6" stroke="#3a5a8a" stroke-width="0.8"/><path d="M2 11h20M12 1v20M4 6h16M4 16h16" stroke="#2f4f7f" stroke-width="0.8" fill="none"/><ellipse cx="12" cy="11" rx="5" ry="10" fill="none" stroke="#2f4f7f" stroke-width="0.8"/><circle cx="7" cy="19" r="4" fill="#111"/><circle cx="17" cy="19" r="4" fill="#111"/><rect x="7" y="15" width="10" height="5" fill="#111"/></svg><div style="position:absolute;left:948.5px;top:98px;width:1px;height:32px;background:#c8c8c8"></div><div style="position:absolute;left:953px;top:102px;width:2px;height:24px;background:repeating-linear-gradient(#9a9a9a 0 2px, transparent 2px 4px)"></div><svg style="position:absolute;left:966.2px;top:102.0px" width="24" height="24" viewBox="0 0 24 24"><path d="M11 2c-5 0-5 2-5 4v3h6v1H4c-2 0-3 2-3 5s1 5 3 5h2v-3c0-2 2-4 4-4h6c2 0 3-1 3-3V6c0-2-2-4-8-4z" fill="#3a74b0"/><path d="M13 22c5 0 5-2 5-4v-3h-6v-1h8c2 0 3-2 3-5s-1-5-3-5h-2v3c0 2-2 4-4 4H8c-2 0-3 1-3 3v4c0 2 2 4 8 4z" fill="#f7d04a"/><path d="M16 17l5 2-5 2" stroke="#333" fill="none" stroke-width="1"/></svg><div style="position:absolute;left:994.8px;top:98px;width:1px;height:32px;background:#c8c8c8"></div><div style="position:absolute;left:999.2px;top:102px;width:2px;height:24px;background:repeating-linear-gradient(#9a9a9a 0 2px, transparent 2px 4px)"></div><svg style="position:absolute;left:1013.2px;top:102.0px" width="24" height="24" viewBox="0 0 24 24"><rect x="3" y="2" width="18" height="20" rx="1" fill="#6a93c8" stroke="#223" stroke-width="1"/><rect x="3" y="2" width="4" height="20" fill="#223a55"/><text x="11" y="16" font-family="Liberation Sans" font-size="11" fill="#fff">?</text></svg><div style="position:absolute;left:1042.5px;top:98px;width:1px;height:32px;background:#c8c8c8"></div><div style="position:absolute;left:1046.8px;top:102px;width:2px;height:24px;background:repeating-linear-gradient(#9a9a9a 0 2px, transparent 2px 4px)"></div><div style="position:absolute;left:3.5px;top:136px;width:2px;height:24px;background:repeating-linear-gradient(#9a9a9a 0 2px, transparent 2px 4px)"></div><svg style="position:absolute;left:15.600000000000001px;top:136.0px" width="24" height="24" viewBox="0 0 24 24"><g opacity="0.45"><path d="M3 21V3l18 18z" fill="#ddd6c8" stroke="#b0a890" stroke-width="1"/><path d="M7 17v-5l5 5z" fill="#fff"/></g></svg><svg style="position:absolute;left:47.5px;top:136.0px" width="24" height="24" viewBox="0 0 24 24"><path d="M3 6c0-3 4-4 8-3s6-1 9 1 2 6-1 7-5 1-8 2-8 0-8-3z" fill="#7fb07f" stroke="#4a5a4a" stroke-width="1" /><rect x="12" y="13" width="11" height="10" rx="1.5" fill="#2f4f6f"/><path d="M14 18h5M17 15.5l3 2.5-3 2.5" stroke="#fff" stroke-width="1.6" fill="none"/></svg><svg style="position:absolute;left:96.0px;top:136.0px" width="24" height="24" viewBox="0 0 24 24"><path d="M3 6c0-3 4-4 8-3s6-1 9 1 2 6-1 7-5 1-8 2-8 0-8-3z" fill="#7fb07f" stroke="#4a5a4a" stroke-width="1" /><rect x="12" y="13" width="11" height="10" rx="1.5" fill="#2f5a7f"/><circle cx="17.5" cy="18" r="2.6" fill="none" stroke="#fff" stroke-width="1.4"/></svg><svg style="position:absolute;left:127.4px;top:136.0px" width="24" height="24" viewBox="0 0 24 24"><path d="M3 5c2-4 8-3 9 1s-2 6-5 5-5-3-4-6z" fill="#7fb07f" stroke="#5a7a5a" stroke-width="0.6"/><path d="M9 12l6-3 6 4-1 7-6 2-6-3z" fill="#8fb8e0" stroke="#4a76a0" stroke-width="0.8"/><path d="M8 7l6 8" stroke="#333" stroke-width="0.8"/></svg><svg style="position:absolute;left:158.7px;top:136.0px" width="24" height="24" viewBox="0 0 24 24"><path d="M2 6c0-3 4-4 8-3s8 0 10 2 1 6-3 6-6 1-9 1-6-2-6-6z" fill="#7fb07f" stroke="#4a5a4a" stroke-width="1"/><ellipse cx="8" cy="7" rx="4" ry="2.5" fill="#f0f0f0" stroke="#4a5a4a" stroke-width="1"/><rect x="14" y="14" width="9" height="9" rx="1.2" fill="#d4a90f"/><path d="M18.5 15.2V21.8M15.2 18.5H21.8M16.2 16.2L20.8 20.8M20.8 16.2L16.2 20.8" stroke="#fff" stroke-width="1.1"/><circle cx="18.5" cy="18.5" r="1.9" fill="#fff"/><circle cx="18.5" cy="18.5" r="0.8" fill="#d4a90f"/></svg><svg style="position:absolute;left:189.4px;top:136.0px" width="24" height="24" viewBox="0 0 24 24"><path d="M3 6c0-3 4-4 8-3s6-1 9 1 2 6-1 7-5 1-8 2-8 0-8-3z" fill="#b8b8b8" stroke="#555" stroke-width="0.9"/><path d="M3 21c0-3 3-6 6-6s2 5-1 6z" fill="#7fb07f" stroke="#5a7a5a" stroke-width="0.6"/><rect x="14" y="14" width="9" height="9" rx="1.2" fill="#d4a90f"/><path d="M18.5 15.2V21.8M15.2 18.5H21.8M16.2 16.2L20.8 20.8M20.8 16.2L16.2 20.8" stroke="#fff" stroke-width="1.1"/><circle cx="18.5" cy="18.5" r="1.9" fill="#fff"/><circle cx="18.5" cy="18.5" r="0.8" fill="#d4a90f"/></svg><svg style="position:absolute;left:219.8px;top:136.0px" width="24" height="24" viewBox="0 0 24 24"><path d="M2 6c0-3 4-4 8-3s8 0 10 2 1 6-3 6-6 1-9 1-6-2-6-6z" fill="#b8b8b8" stroke="#555" stroke-width="1"/><ellipse cx="8" cy="7" rx="4" ry="2.5" fill="#7fb07f" stroke="#4a5a4a" stroke-width="1"/><rect x="14" y="14" width="9" height="9" rx="1.2" fill="#d4a90f"/><path d="M18.5 15.2V21.8M15.2 18.5H21.8M16.2 16.2L20.8 20.8M20.8 16.2L16.2 20.8" stroke="#fff" stroke-width="1.1"/><circle cx="18.5" cy="18.5" r="1.9" fill="#fff"/><circle cx="18.5" cy="18.5" r="0.8" fill="#d4a90f"/></svg><svg style="position:absolute;left:251.2px;top:136.0px" width="24" height="24" viewBox="0 0 24 24"><path d="M2 6c0-3 4-4 8-3s8 0 10 2 1 6-3 6-6 1-9 1-6-2-6-6z" fill="#7fb07f" stroke="#4a5a4a" stroke-width="1"/><ellipse cx="8" cy="7" rx="4" ry="2.5" fill="#f0f0f0" stroke="#4a5a4a" stroke-width="1"/><rect x="14" y="14" width="9" height="9" rx="1.2" fill="#e05a5a"/><path d="M16.3 16.3l4.4 4.4m0-4.4l-4.4 4.4" stroke="#fff" stroke-width="1.8"/></svg><svg style="position:absolute;left:282.5px;top:136.0px" width="24" height="24" viewBox="0 0 24 24"><path d="M3 6c0-3 4-4 8-3s6-1 9 1 2 6-1 7-5 1-8 2-8 0-8-3z" fill="#b8b8b8" stroke="#555" stroke-width="0.9"/><path d="M3 21c0-3 3-6 6-6s2 5-1 6z" fill="#7fb07f" stroke="#5a7a5a" stroke-width="0.6"/><rect x="14" y="14" width="9" height="9" rx="1.2" fill="#e05a5a"/><path d="M16.3 16.3l4.4 4.4m0-4.4l-4.4 4.4" stroke="#fff" stroke-width="1.8"/></svg><svg style="position:absolute;left:312.9px;top:136.0px" width="24" height="24" viewBox="0 0 24 24"><path d="M2 6c0-3 4-4 8-3s8 0 10 2 1 6-3 6-3 1-5 1 0 8-4 8-2-6-3-8-3-4-3-6z" fill="#7fb07f" stroke="#5a7a5a" stroke-width="0.6"/><path d="M6 12c1 3 0 8 3 9 2-1 0-6 1-8" fill="#d4b040" stroke="#9a7a20" stroke-width="0.6"/></svg><svg style="position:absolute;left:343.6px;top:136.0px" width="24" height="24" viewBox="0 0 24 24"><path d="M4 17c-3-4 2-8 7-12s10-4 11 0-4 9-9 13-8 3-9-1z" fill="#d9b92f" stroke="#6a5a1a" stroke-width="0.8"/><path d="M7 16c-2-3 2-6 5-9s7-3 8 0-3 6-6 9-6 3-7 0z" fill="#7fb07f"/></svg><svg style="position:absolute;left:374.9px;top:136.0px" width="24" height="24" viewBox="0 0 24 24"><g opacity="0.4"><path d="M2 3l7 15 5-12 7 0" fill="none" stroke="#666" stroke-width="1"/><circle cx="9" cy="18" r="1.8" fill="#fff" stroke="#666"/><circle cx="14" cy="6" r="1.8" fill="#fff" stroke="#666"/><rect x="13" y="13" width="10" height="10" rx="2" fill="#888"/></g></svg><svg style="position:absolute;left:406.2px;top:136.0px" width="24" height="24" viewBox="0 0 24 24"><path d="M3 6c0-3 3-4 6-3l2 1v10c-3 1-5 1-7-1s-1-5-1-7z" fill="#aaa" stroke="#555" stroke-width="0.9"/><path d="M13 4l2-1c3-1 6 0 7 3s0 6-3 7-4 1-6 0z" fill="#7fb07f" stroke="#5a7a5a" stroke-width="0.6"/><path d="M7 21l9-19M17 21L8 2" stroke="#888" stroke-width="1.2"/><circle cx="7" cy="20" r="2.5" fill="none" stroke="#c02020" stroke-width="1.6"/><circle cx="17" cy="20" r="2.5" fill="none" stroke="#c02020" stroke-width="1.6"/></svg><svg style="position:absolute;left:437.6px;top:136.0px" width="24" height="24" viewBox="0 0 24 24"><path d="M3 6c0-3 3-4 6-3l2 1v10c-3 1-5 1-7-1s-1-5-1-7z" fill="#7fb07f" stroke="#555" stroke-width="0.9"/><path d="M13 4l2-1c3-1 6 0 7 3s0 6-3 7-4 1-6 0z" fill="#7fb07f" stroke="#5a7a5a" stroke-width="0.6"/><path d="M7 21l9-19M17 21L8 2" stroke="#888" stroke-width="1.2"/><circle cx="7" cy="20" r="2.5" fill="none" stroke="#c02020" stroke-width="1.6"/><circle cx="17" cy="20" r="2.5" fill="none" stroke="#c02020" stroke-width="1.6"/></svg><svg style="position:absolute;left:467.3px;top:136.0px" width="24" height="24" viewBox="0 0 24 24"><g opacity="0.4"><path d="M3 6c0-3 3-4 6-3s4 2 6 1 7-1 7 3-4 5-7 4c-3 0-5 2-6 4l-2 8" fill="#bbb" stroke="#888" stroke-width="0.6"/></g></svg><svg style="position:absolute;left:498.7px;top:136.0px" width="24" height="24" viewBox="0 0 24 24"><g opacity="0.4"><path d="M12 2v20M3 5h18M3 12h18M3 19h18M6 3v4M18 3v4M6 10v4M18 10v4M6 17v4M18 17v4" stroke="#888" stroke-width="1"/></g></svg><svg style="position:absolute;left:530.0px;top:136.0px" width="24" height="24" viewBox="0 0 24 24"><g opacity="0.4"><path d="M12 3l8 5-8 5zM12 3v18l-6-5" fill="#ccc" stroke="#999" stroke-width="0.8"/><path d="M4 14a8 8 0 0 1 6-10" stroke="#999" fill="none"/></g></svg><svg style="position:absolute;left:77px;top:144px" width="12" height="8"><path d="M0 1h12L6 7z" fill="#000"/></svg><svg style="position:absolute;left:560.4px;top:144px" width="12" height="8"><path d="M0 1h12L6 7z" fill="#666"/></svg><div style="position:absolute;left:578px;top:132px;width:1px;height:32px;background:#c8c8c8"></div><div style="position:absolute;left:582px;top:136px;width:2px;height:24px;background:repeating-linear-gradient(#9a9a9a 0 2px, transparent 2px 4px)"></div><svg style="position:absolute;left:597.0px;top:136.0px" width="24" height="24" viewBox="0 0 24 24"><g transform="rotate(-45 12 12)"><path d="M6.5 2V12A5.5 5.5 0 0 0 17.5 12V2" fill="none" stroke="#8a1010" stroke-width="6"/><path d="M6.5 2V12A5.5 5.5 0 0 0 17.5 12V2" fill="none" stroke="#e02020" stroke-width="4.4"/><path d="M6.5 1.5V5.5M17.5 1.5V5.5" stroke="#fff" stroke-width="4.4"/></g></svg><svg style="position:absolute;left:625.4px;top:136.0px" width="24" height="24" viewBox="0 0 24 24"><g opacity="0.4"><path d="M3 3l6 14 5-11 6 0" fill="none" stroke="#777" stroke-width="1"/><rect x="1" y="1" width="3" height="3" fill="none" stroke="#777"/><rect x="8" y="16" width="3" height="3" fill="none" stroke="#777"/><rect x="13" y="4" width="3" height="3" fill="none" stroke="#777"/><rect x="19" y="4" width="3" height="3" fill="none" stroke="#777"/></g><path d="M14 18h8l-4 4z" fill="#666"/></svg><svg style="position:absolute;left:656.8px;top:136.0px" width="24" height="24" viewBox="0 0 24 24"><g opacity="0.4"><rect x="3" y="3" width="3" height="3" fill="none" stroke="#777"/><rect x="15" y="8" width="3" height="3" fill="none" stroke="#777"/><rect x="7" y="16" width="3" height="3" fill="none" stroke="#777"/><path d="M15 13h3M3 10h3" stroke="#777"/></g><path d="M14 18h8l-4 4z" fill="#666"/></svg><svg style="position:absolute;left:876.9px;top:136.0px" width="24" height="24" viewBox="0 0 24 24"><path d="M9 12V23M9 12l13-4M9 12L2 2" stroke="#5cb85c" stroke-width="2"/><rect x="7" y="10" width="4" height="4" fill="none" stroke="#555" stroke-width="1.2"/></svg><svg style="position:absolute;left:907.2px;top:136.0px" width="24" height="24" viewBox="0 0 24 24"><g opacity="0.35"><path d="M2 2l20 20M22 2L2 22" stroke="#999" stroke-width="1.4"/><rect x="10" y="10" width="4" height="4" fill="#fff" stroke="#999"/></g></svg><svg style="position:absolute;left:938.6px;top:136.0px" width="24" height="24" viewBox="0 0 24 24"><g opacity="0.4"><path d="M2 22L22 2M4 4l6 6M14 14l6 6" stroke="#999" stroke-width="1.6"/><path d="M9 7l6 2 2 6-6-2z" fill="#bbb09a"/></g></svg><svg style="position:absolute;left:969.3px;top:144px" width="12" height="8"><path d="M0 1h12L6 7z" fill="#666"/></svg><div style="position:absolute;left:685px;top:136px;width:106px;height:23px;background:#f0f0f0;border:1px solid #cfcfcf;box-sizing:border-box"></div><div class="t" style="left:689px;top:140.46px;font-size:16px;line-height:16px;color:#8a7a5a;">12</div><svg style="position:absolute;left:775px;top:138px" width="14" height="19" viewBox="0 0 14 19"><path d="M2 7l5-5 5 5z M2 12l5 5 5-5z" fill="#666"/></svg><div style="position:absolute;left:791px;top:136px;width:83px;height:23px;background:#cccccc;border:1px solid #c0c0c0;box-sizing:border-box"></div><div class="t" style="left:795.7px;top:139.61px;font-size:17px;line-height:17px;color:#888;">px</div><svg style="position:absolute;left:855px;top:143px" width="12" height="8" viewBox="0 0 12 8"><path d="M1 1l5 5 5-5" fill="none" stroke="#999" stroke-width="1"/></svg><div style="position:absolute;left:3.5px;top:170px;width:2px;height:24px;background:repeating-linear-gradient(#9a9a9a 0 2px, transparent 2px 4px)"></div><svg style="position:absolute;left:15.600000000000001px;top:169.5px" width="24" height="24" viewBox="0 0 24 24"><path d="M2 2h8l3 3v13H2z" fill="#f4f8fc" stroke="#4a6a9a" stroke-width="0.8"/><path d="M9 6h8l4 4v13H9z" fill="#f4f8fc" stroke="#2a5a9a" stroke-width="0.9"/><circle cx="6" cy="9" r="1" fill="#e22"/><circle cx="15" cy="17" r="1" fill="#e22"/></svg><svg style="position:absolute;left:47.5px;top:169.5px" width="24" height="24" viewBox="0 0 24 24"><path d="M2 3l4 1 5-2 5 2 6-1-1 5 1 6-1 6 1 3-5-1-5 1-5-1-5 1 1-6-1-5z" fill="#b5d9a0" stroke="#9ac080" stroke-width="0.5"/><path d="M7 18l5-5" stroke="#555" stroke-width="1.6"/><circle cx="14" cy="10" r="4.5" fill="#e21"/><path d="M10 7l8 6" stroke="#e21" stroke-width="4"/></svg><svg style="position:absolute;left:77.3px;top:169.5px" width="24" height="24" viewBox="0 0 24 24"><circle cx="10" cy="9" r="7.5" fill="#e8f1fb" stroke="#2a3a8a" stroke-width="1.6"/><circle cx="10" cy="9" r="1.5" fill="#e22"/><path d="M15 14l7 7" stroke="#f0a020" stroke-width="3.5"/></svg><svg style="position:absolute;left:108.6px;top:169.5px" width="24" height="24" viewBox="0 0 24 24"><circle cx="10" cy="9" r="7.5" fill="#e8f1fb" stroke="#2a3a8a" stroke-width="1.6"/><circle cx="10" cy="9" r="1.5" fill="#e22"/><path d="M15 14l7 7" stroke="#f0a020" stroke-width="3.5"/><circle cx="21" cy="4" r="1.4" fill="#e22"/><circle cx="4" cy="20" r="1.4" fill="#e22"/><circle cx="9" cy="22" r="1.4" fill="#e22"/></svg><svg style="position:absolute;left:140.0px;top:169.5px" width="24" height="24" viewBox="0 0 24 24"><ellipse cx="12" cy="12" rx="10" ry="9" fill="none" stroke="#555" stroke-width="1.5"/><path d="M2 12h20M12 3v18M4 7h16M4 17h16" stroke="#555" stroke-width="1.2"/><ellipse cx="12" cy="12" rx="5" ry="9" fill="none" stroke="#555" stroke-width="1.2"/><path d="M2 9l10-6 10 6" stroke="#555" fill="none"/></svg><svg style="position:absolute;left:171.3px;top:169.5px" width="24" height="24" viewBox="0 0 24 24"><g opacity="0.35"><text x="1" y="10" font-family="Liberation Sans" font-weight="bold" font-size="9" fill="#888">X,Y</text><circle cx="5" cy="18" r="2.5" fill="#999"/><rect x="12" y="13" width="9" height="9" rx="1.2" fill="#aaa"/><path d="M16.5 14.2V20.8M13.2 17.5H19.8M14.2 15.2L18.8 19.8M18.8 15.2L14.2 19.8" stroke="#fff" stroke-width="1.1"/><circle cx="16.5" cy="17.5" r="1.9" fill="#fff"/><circle cx="16.5" cy="17.5" r="0.8" fill="#aaa"/></g></svg><svg style="position:absolute;left:202.0px;top:169.5px" width="24" height="24" viewBox="0 0 24 24"><rect x="3" y="3" width="18" height="18" fill="#b8dca8" stroke="#2a3a2a" stroke-width="1"/><circle cx="12" cy="12" r="1.8" fill="#e22"/><rect x="1" y="1" width="4" height="4" fill="#fff" stroke="#333" stroke-width="0.8"/><rect x="19" y="1" width="4" height="4" fill="#fff" stroke="#333" stroke-width="0.8"/><rect x="1" y="19" width="4" height="4" fill="#fff" stroke="#333" stroke-width="0.8"/><rect x="19" y="19" width="4" height="4" fill="#fff" stroke="#333" stroke-width="0.8"/></svg><div style="position:absolute;left:0px;top:983px;width:1915px;height:34px;background:#f0f0f0"></div><div style="position:absolute;left:0px;top:199px;width:323px;height:784px;background:#f0f0f0"></div><div style="position:absolute;left:0px;top:200px;width:317px;height:37px;background:#d9d9d9;border:1px solid #c9c9c9;border-left:none;box-sizing:border-box"></div><div class="t" style="left:4.5px;top:212.59px;font-size:17.5px;line-height:17.5px;color:#000;">Browser</div><svg style="position:absolute;left:260px;top:207.5px" width="21" height="22" viewBox="0 0 21 22"><rect x="7" y="1" width="12" height="10.8" fill="none" stroke="#333" stroke-width="2.3"/><rect x="5.85" y="-0.15" width="14.3" height="3.6" fill="#333"/><rect x="1.85" y="7.6" width="11.8" height="11.8" fill="#d9d9d9" stroke="#333" stroke-width="2.3"/><rect x="0.7" y="6.45" width="14.1" height="3.6" fill="#333"/></svg><svg style="position:absolute;left:290px;top:208.5px" width="20" height="20" viewBox="0 0 20 20"><path d="M2.5 2.5l15 15M17.5 2.5l-15 15" stroke="#333" stroke-width="3.6"/></svg><svg style="position:absolute;left:4px;top:244px" width="16" height="16" viewBox="0 0 16 16"><rect x="1" y="1" width="11" height="11" fill="#f4f4f4" stroke="#777" stroke-width="1"/><circle cx="12" cy="12" r="3.5" fill="#4e9a5a"/><circle cx="12" cy="12" r="1.8" fill="#dfe"/></svg><svg style="position:absolute;left:27px;top:244px" width="16" height="16" viewBox="0 0 16 16"><path d="M2 7a6 6 0 0 1 11-3l2-2v6h-6l2-2a4 4 0 0 0-7 1z" fill="#3f86d0"/><path d="M14 9a6 6 0 0 1-11 3l-2 2V8h6l-2 2a4 4 0 0 0 7-1z" fill="#5fa0e0"/></svg><svg style="position:absolute;left:50px;top:244px" width="16" height="16" viewBox="0 0 16 16"><path d="M1 1h14l-5 7v7l-3-2V8z" fill="#6a9ad6" stroke="#3a6aa6" stroke-width="0.6"/><rect x="2" y="1.5" width="12" height="2" fill="#f5d64a"/></svg><svg style="position:absolute;left:73px;top:244px" width="16" height="16" viewBox="0 0 16 16"><path d="M1 1h13M2 1v14" stroke="#888"/><rect x="4" y="5" width="3" height="3" fill="#f5a030"/><rect x="4" y="11" width="3" height="3" fill="#f5a030"/><path d="M11 15V6H8l4-5 4 5h-3v9z" fill="#6a9ad6" stroke="#2a4a7a" stroke-width="0.8"/></svg><svg style="position:absolute;left:96px;top:244px" width="16" height="16" viewBox="0 0 16 16"><circle cx="8" cy="8" r="7" fill="#6a9ad6" stroke="#4a7ab6" stroke-width="0.6"/><text x="5.5" y="13" font-family="Liberation Serif" font-style="italic" font-weight="bold" font-size="10" fill="#fff">i</text></svg><div style="position:absolute;left:0px;top:265px;width:317px;height:222px;background:#fff;border:1px solid #828790;border-left:none;box-sizing:border-box"></div><div style="position:absolute;left:291px;top:266px;width:25px;height:220px;background:#f0f0f0"></div><div style="position:absolute;left:292px;top:292px;width:23px;height:56px;background:#cdcdcd"></div><svg style="position:absolute;left:295px;top:272px" width="17" height="12" viewBox="0 0 17 12"><path d="M2 10l6.5-6.5L15 10" fill="none" stroke="#555" stroke-width="2.2"/></svg><svg style="position:absolute;left:295px;top:467px" width="17" height="12" viewBox="0 0 17 12"><path d="M2 2l6.5 6.5L15 2" fill="none" stroke="#555" stroke-width="2.2"/></svg><div style="position:absolute;left:0;top:266px;width:291px;height:220px;overflow:hidden"><svg style="position:absolute;left:33px;top:3px" width="24" height="24" viewBox="0 0 24 24"><path d="M12 1.5l3 7.5 8 .5-6 5 2 8-7-4.5-7 4.5 2-8-6-5 8-.5z" fill="#f8ec60" stroke="#d6b020" stroke-width="1.2"/></svg><div class="t" style="left:63.5px;top:8.10px;font-size:17.6px;line-height:17.6px;color:#000;">Favorites</div><svg style="position:absolute;left:9px;top:37px" width="12" height="14" viewBox="0 0 12 14"><path d="M2.5 1.5l6 5.5-6 5.5" fill="none" stroke="#9a9a9a" stroke-width="2.6"/></svg><svg style="position:absolute;left:33px;top:34px" width="24" height="22" viewBox="0 0 24 22"><path d="M2 1h8l3 2h9v15H2z" fill="#b8dc5c" stroke="#7a7a7a" stroke-width="1.4"/><path d="M3 3l18 17M2 14c5-1 12-3 20-3" stroke="#eef6d8" stroke-width="1" fill="none"/><path d="M11 8l5-1 3 3-4 4z" fill="#149a14"/></svg><div class="t" style="left:63.5px;top:37.10px;font-size:17.6px;line-height:17.6px;color:#000;">Project Home</div><svg style="position:absolute;left:9px;top:66px" width="12" height="14" viewBox="0 0 12 14"><path d="M2.5 1.5l6 5.5-6 5.5" fill="none" stroke="#9a9a9a" stroke-width="2.6"/></svg><svg style="position:absolute;left:33px;top:63px" width="24" height="22" viewBox="0 0 24 22"><path d="M2 1h8l3 2h9v15H2z" fill="#f0f0f0" stroke="#7a7a7a" stroke-width="1.4"/><path d="M7 17v-6l5-4 5 4v6z" fill="none" stroke="#333" stroke-width="1.4"/></svg><div class="t" style="left:63.5px;top:66.10px;font-size:17.6px;line-height:17.6px;color:#000;">Home</div><svg style="position:absolute;left:9px;top:95px" width="12" height="14" viewBox="0 0 12 14"><path d="M2.5 1.5l6 5.5-6 5.5" fill="none" stroke="#9a9a9a" stroke-width="2.6"/></svg><svg style="position:absolute;left:33px;top:92px" width="24" height="22" viewBox="0 0 24 22"><path d="M2 1h8l3 2h9v15H2z" fill="#f0f0f0" stroke="#7a7a7a" stroke-width="1.4"/></svg><div class="t" style="left:63.5px;top:95.10px;font-size:17.6px;line-height:17.6px;color:#000;">C:\</div><svg style="position:absolute;left:9px;top:124px" width="12" height="14" viewBox="0 0 12 14"><path d="M2.5 1.5l6 5.5-6 5.5" fill="none" stroke="#9a9a9a" stroke-width="2.6"/></svg><svg style="position:absolute;left:33px;top:121px" width="24" height="22" viewBox="0 0 24 22"><path d="M2 1h8l3 2h9v15H2z" fill="#f0f0f0" stroke="#7a7a7a" stroke-width="1.4"/></svg><div class="t" style="left:63.5px;top:124.10px;font-size:17.6px;line-height:17.6px;color:#000;">D:\</div><svg style="position:absolute;left:9px;top:153px" width="12" height="14" viewBox="0 0 12 14"><path d="M2.5 1.5l6 5.5-6 5.5" fill="none" stroke="#9a9a9a" stroke-width="2.6"/></svg><svg style="position:absolute;left:33px;top:150px" width="24" height="22" viewBox="0 0 24 22"><path d="M2 1h8l3 2h9v15H2z" fill="#f0f0f0" stroke="#7a7a7a" stroke-width="1.4"/></svg><div class="t" style="left:63.5px;top:153.10px;font-size:17.6px;line-height:17.6px;color:#000;">F:\</div><svg style="position:absolute;left:9px;top:182px" width="12" height="14" viewBox="0 0 12 14"><path d="M2.5 1.5l6 5.5-6 5.5" fill="none" stroke="#9a9a9a" stroke-width="2.6"/></svg><svg style="position:absolute;left:33px;top:179px" width="24" height="22" viewBox="0 0 24 22"><path d="M2 1h8l3 2h9v15H2z" fill="#f0f0f0" stroke="#7a7a7a" stroke-width="1.4"/></svg><div class="t" style="left:63.5px;top:182.10px;font-size:17.6px;line-height:17.6px;color:#000;">Z:\</div><svg style="position:absolute;left:33px;top:206px" width="24" height="24" viewBox="0 0 24 24"><path d="M2 11l4-3h15v12l-4 3H2z" fill="#f5d64a" stroke="#333" stroke-width="0.8"/><circle cx="12" cy="9" r="7" fill="#7ea6d6" stroke="#335" stroke-width="0.6"/><path d="M8 6c2 0 3 2 5 1s2 3 4 3M9 12c2-1 3 1 5 1" stroke="#2f4f7f" stroke-width="1.4" fill="none"/></svg><div class="t" style="left:63.5px;top:211.10px;font-size:17.6px;line-height:17.6px;color:#000;">GeoPackage</div></div><div style="position:absolute;left:0px;top:494px;width:317px;height:37px;background:#d9d9d9;border:1px solid #c9c9c9;border-left:none;box-sizing:border-box"></div><div class="t" style="left:4.5px;top:506.36px;font-size:18px;line-height:18px;color:#000;">Advanced Digitizing</div><svg style="position:absolute;left:260px;top:501.5px" width="21" height="22" viewBox="0 0 21 22"><rect x="7" y="1" width="12" height="10.8" fill="none" stroke="#333" stroke-width="2.3"/><rect x="5.85" y="-0.15" width="14.3" height="3.6" fill="#333"/><rect x="1.85" y="7.6" width="11.8" height="11.8" fill="#d9d9d9" stroke="#333" stroke-width="2.3"/><rect x="0.7" y="6.45" width="14.1" height="3.6" fill="#333"/></svg><svg style="position:absolute;left:290px;top:502.5px" width="20" height="20" viewBox="0 0 20 20"><path d="M2.5 2.5l15 15M17.5 2.5l-15 15" stroke="#333" stroke-width="3.6"/></svg><svg style="position:absolute;left:4px;top:538px" width="16" height="16" viewBox="0 0 16 16"><path d="M1 15V1l14 14z" fill="#dcd8d0" stroke="#c0bcb0"/><path d="M4 12v-4l4 4z" fill="#f0f0f0"/></svg><div style="position:absolute;left:28px;top:538px;width:1px;height:16px;background:#d0d0d0"></div><svg style="position:absolute;left:36px;top:538px" width="16" height="16" viewBox="0 0 16 16"><rect x="1" y="3" width="11" height="11" fill="none" stroke="#d0ccc4" stroke-width="1.5"/><rect x="5" y="1" width="9" height="9" fill="none" stroke="#d0ccc4" stroke-width="1.5"/></svg><svg style="position:absolute;left:58px;top:538px" width="16" height="16" viewBox="0 0 16 16"><path d="M1 4l14 6M1 9l14 6M5 3l6 12" stroke="#d0ccc4" stroke-width="1.6"/></svg><svg style="position:absolute;left:82px;top:538px" width="16" height="16" viewBox="0 0 16 16"><path d="M1 4l14 6M5 3v12" stroke="#d0ccc4" stroke-width="1.8"/></svg><div style="position:absolute;left:106px;top:538px;width:1px;height:16px;background:#d0d0d0"></div><svg style="position:absolute;left:114px;top:538px" width="16" height="16" viewBox="0 0 16 16"><circle cx="8" cy="7" r="6" fill="#dcd8cc"/><path d="M6 10h8l-4 4z" fill="#999"/></svg><div class="t" style="left:-2.5px;width:320px;text-align:center;top:623.37px;font-size:16.1px;line-height:16.1px;color:#000;">CAD tools are not enabled for the current</div><div class="t" style="left:-2.5px;width:320px;text-align:center;top:642.37px;font-size:16.1px;line-height:16.1px;color:#000;">map tool</div><div style="position:absolute;left:0px;top:727px;width:317px;height:37px;background:#d9d9d9;border:1px solid #c9c9c9;border-left:none;box-sizing:border-box"></div><div class="t" style="left:4.5px;top:740.80px;font-size:16.3px;line-height:16.3px;color:#000;">Layers</div><svg style="position:absolute;left:260px;top:734.5px" width="21" height="22" viewBox="0 0 21 22"><rect x="7" y="1" width="12" height="10.8" fill="none" stroke="#333" stroke-width="2.3"/><rect x="5.85" y="-0.15" width="14.3" height="3.6" fill="#333"/><rect x="1.85" y="7.6" width="11.8" height="11.8" fill="#d9d9d9" stroke="#333" stroke-width="2.3"/><rect x="0.7" y="6.45" width="14.1" height="3.6" fill="#333"/></svg><svg style="position:absolute;left:290px;top:735.5px" width="20" height="20" viewBox="0 0 20 20"><path d="M2.5 2.5l15 15M17.5 2.5l-15 15" stroke="#333" stroke-width="3.6"/></svg><svg style="position:absolute;left:4px;top:771px" width="16" height="16" viewBox="0 0 16 16"><path d="M2 12l4-4 3 3-4 4z" fill="#e84c3c"/><path d="M4 10l2-2 3 3-2 2z" fill="#f5d040"/><path d="M8 9l7-7" stroke="#e0a030" stroke-width="2"/></svg><svg style="position:absolute;left:27px;top:771px" width="16" height="16" viewBox="0 0 16 16"><rect x="3" y="4" width="8" height="11" fill="none" stroke="#888"/><rect x="6" y="1" width="5" height="8" fill="none" stroke="#888"/><circle cx="12" cy="13" r="3" fill="#4e9a5a"/></svg><svg style="position:absolute;left:50px;top:771px" width="16" height="16" viewBox="0 0 16 16"><path d="M0.5 7c3-4.5 11-4.5 14 0-3 4.5-11 4.5-14 0z" fill="#e8e8e8" stroke="#999"/><circle cx="7" cy="7" r="3" fill="#4a7ab8"/><path d="M5 9h10l-5 5z" fill="#111"/></svg><svg style="position:absolute;left:73px;top:771px" width="16" height="16" viewBox="0 0 16 16"><path d="M1 1h14l-5 7v7l-3-2V8z" fill="#6a9ad6" stroke="#3a6aa6" stroke-width="0.6"/><rect x="2" y="1.5" width="12" height="2" fill="#f5d64a"/></svg><svg style="position:absolute;left:96px;top:771px" width="16" height="16" viewBox="0 0 16 16"><text x="-0.5" y="12" font-family="Liberation Serif" font-size="17" fill="#6a2a8a">&#949;</text><path d="M8 9h7v7h-2v-3h-3v3H8z" fill="#888"/></svg><svg style="position:absolute;left:118.6px;top:775px" width="12" height="8"><path d="M0 1h12L6 7z" fill="#000"/></svg><svg style="position:absolute;left:137px;top:771px" width="16" height="16" viewBox="0 0 16 16"><path d="M1 1h5M1 1v14h5" stroke="#999" fill="none"/><rect x="3" y="4" width="3" height="3" fill="#f5a030"/><rect x="3" y="10" width="3" height="3" fill="#f5a030"/><path d="M10 1v9H7l4 5 4-5h-3V1z" fill="#6a9ad6" stroke="#2a4a7a" stroke-width="0.8"/></svg><svg style="position:absolute;left:160px;top:771px" width="16" height="16" viewBox="0 0 16 16"><path d="M1 1h5M1 1v14h5" stroke="#999" fill="none"/><rect x="3" y="4" width="3" height="3" fill="#f5a030"/><rect x="3" y="10" width="3" height="3" fill="#f5a030"/><path d="M10 15V6H7l4-5 4 5h-3v9z" fill="#6a9ad6" stroke="#2a4a7a" stroke-width="0.8"/></svg><svg style="position:absolute;left:183px;top:771px" width="16" height="16" viewBox="0 0 16 16"><rect x="1" y="1" width="12" height="12" fill="none" stroke="#888"/><rect x="9" y="11" width="7" height="5" rx="1.5" fill="#e33"/><path d="M10.5 13.5h4" stroke="#fff"/></svg><div style="position:absolute;left:0px;top:792px;width:317px;height:191px;background:#fff;border:1px solid #828790;border-left:none;box-sizing:border-box"></div><div style="position:absolute;left:30px;top:822px;width:286px;height:29px;background:#d9d9d9"></div><div style="position:absolute;left:33px;top:797px;width:20px;height:20px;background:#fff;border:1px solid #333;box-sizing:border-box"></div><svg style="position:absolute;left:33px;top:797px" width="20" height="20" viewBox="0 0 20 20"><path d="M4.5 10l4 4 7-8" fill="none" stroke="#222" stroke-width="1.4"/></svg><div style="position:absolute;left:59px;top:797px;width:22px;height:21px;background:#c83a36;border:1px solid #7a2a2a;box-sizing:border-box"></div><div class="t" style="left:87.3px;top:800.60px;font-size:17.25px;line-height:17.25px;color:#000;font-weight:700;">upenn_site_projected</div><div style="position:absolute;left:33px;top:826px;width:20px;height:20px;background:#fff;border:1px solid #333;box-sizing:border-box"></div><svg style="position:absolute;left:33px;top:826px" width="20" height="20" viewBox="0 0 20 20"><path d="M4.5 10l4 4 7-8" fill="none" stroke="#222" stroke-width="1.4"/></svg><svg style="position:absolute;left:59px;top:826px" width="21" height="20" viewBox="0 0 21 20"><rect x="0.5" y="0.5" width="20" height="19" fill="#6a67b8" stroke="#4a4a8a"/><path d="M5 17l2-6 7-9 3 2-7 9z" fill="#c8a070" stroke="#6a4a2a" stroke-width="0.8"/><path d="M5 17l2-6 3 2z" fill="#9ac8e8"/></svg><div class="t" style="left:85.5px;top:829.56px;font-size:17.3px;line-height:17.3px;color:#000;font-weight:700;text-decoration:underline;text-decoration-thickness:1.5px;text-underline-offset:2px;">landuse_interest</div><div style="position:absolute;left:33px;top:855px;width:20px;height:20px;background:#fff;border:1px solid #333;box-sizing:border-box"></div><div style="position:absolute;left:59px;top:855px;width:22px;height:21px;background:#86e03a;border:1px solid #4a7a2a;box-sizing:border-box"></div><div class="t" style="left:87.3px;top:860.05px;font-size:16.6px;line-height:16.6px;color:#b4b4b4;font-weight:700;font-style:italic;">Land_Use_projected</div><div style="position:absolute;left:33px;top:884px;width:20px;height:20px;background:#fff;border:1px solid #333;box-sizing:border-box"></div><svg style="position:absolute;left:62px;top:884.5px" width="20" height="20" viewBox="0 0 20 20"><rect x="0" y="0" width="20" height="20" fill="#b4cde8"/><rect x="0" y="0" width="6" height="6" fill="#1a2a4a"/><rect x="13" y="0" width="7" height="6" fill="#1a2a4a"/><rect x="6" y="6" width="7" height="7" fill="#1a2a4a"/><rect x="0" y="13" width="6" height="7" fill="#1a2a4a"/><rect x="13" y="13" width="7" height="7" fill="#fff"/></svg><svg style="position:absolute;left:8px;top:888px" width="14" height="10" viewBox="0 0 14 10"><path d="M1.5 2l5.5 5.5 5.5-5.5" fill="none" stroke="#333" stroke-width="2.6"/></svg><div class="t" style="left:90px;top:888.50px;font-size:17.25px;line-height:17.25px;color:#b4b4b4;font-weight:700;font-style:italic;">Google Maps</div><div style="position:absolute;left:3px;top:988px;width:293px;height:25px;background:#fff;border:1px solid #7a7a7a;box-sizing:border-box"></div><svg style="position:absolute;left:11px;top:993px" width="14" height="14" viewBox="0 0 14 14"><circle cx="5.5" cy="5.5" r="4" fill="none" stroke="#888" stroke-width="1.4"/><path d="M8.5 8.5l4 4" stroke="#888" stroke-width="1.6"/></svg><div class="t" style="left:32px;top:993.20px;font-size:16.3px;line-height:16.3px;color:#6d6d6d;">Type to locate (Ctrl+K)</div><div style="position:absolute;left:323px;top:199px;width:1592px;height:784px;background:#fff;border:1px solid #828790;border-right:none;box-sizing:border-box"></div><svg style="position:absolute;left:0;top:0" width="1915" height="1017" viewBox="0 0 1915 1017"><polygon points="1256.4,280.5 1274.3,277.5 1275.0,282.4 1292.4,275.6 1291.6,269.7 1296.0,267.7 1366.2,367.0 1369.0,387.7 1367.3,399.5 1349.6,397.7 1350.4,386.2 1339.8,385.3 1337.2,405.7 1331.9,406.5 1331.0,411.9 1327.0,412.7 1327.4,418.0 1331.0,422.5 1330.1,436.6 1325.7,439.3 1320.4,437.5 1316.8,429.6 1306.2,427.8 1304.5,434.0 1271.0,431.5 1265.0,434.0 1262.0,440.0 1261.0,452.5 1247.0,450.0 1249.0,420.0 1251.5,395.0 1253.0,364.0 1255.0,345.0 1259.0,340.5 1262.0,326.7 1259.0,318.8 1254.7,287.4" fill="#8a5b9b" stroke="#222" stroke-width="1.5" stroke-linejoin="round"/><polyline points="1253.0,392.0 1257.0,402.0 1262.0,411.5 1268.0,418.0 1276.0,424.0 1288.0,427.0 1302.0,427.5" fill="none" stroke="#222" stroke-width="1.1" stroke-linejoin="round" stroke-linecap="round"/><polyline points="1249.0,414.0 1255.0,412.0 1259.0,440.0" fill="none" stroke="#222" stroke-width="1.1" stroke-linejoin="round" stroke-linecap="round"/><polygon points="1018.6,351.5 1027.3,350.7 1029.6,373.9 1021.0,374.7" fill="#8a5b9b" stroke="#222" stroke-width="1.5" stroke-linejoin="round"/><polygon points="1040.6,348.3 1057.6,347.1 1059.5,369.2 1042.2,371.5" fill="#8a5b9b" stroke="#222" stroke-width="1.5" stroke-linejoin="round"/><polygon points="1062.3,359.3 1074.1,358.6 1087.9,361.7 1087.1,366.8 1063.5,369.2" fill="#8a5b9b" stroke="#222" stroke-width="1.5" stroke-linejoin="round"/><polygon points="1092.6,357.8 1104.8,363.3 1093.0,365.6" fill="#8a5b9b" stroke="#222" stroke-width="1.5" stroke-linejoin="round"/><polygon points="1142.6,333.4 1162.2,330.0 1163.5,340.0 1143.9,343.4" fill="#8a5b9b" stroke="#222" stroke-width="1.5" stroke-linejoin="round"/><polygon points="1144.3,344.2 1163.5,341.7 1164.7,353.4 1146.4,356.3" fill="#8a5b9b" stroke="#222" stroke-width="1.5" stroke-linejoin="round"/><polygon points="1166.4,340.9 1191.1,338.0 1192.7,348.8 1167.7,352.6" fill="#8a5b9b" stroke="#222" stroke-width="1.5" stroke-linejoin="round"/><polygon points="1147.6,361.0 1165.6,358.4 1167.7,382.2 1151.0,383.5" fill="#8a5b9b" stroke="#222" stroke-width="1.5" stroke-linejoin="round"/><polygon points="1196.9,352.2 1206.5,351.3 1209.0,380.2 1198.2,380.6" fill="#8a5b9b" stroke="#222" stroke-width="1.5" stroke-linejoin="round"/><polygon points="1208.6,350.1 1213.6,349.7 1214.0,356.3 1219.0,356.8 1221.6,378.9 1211.1,379.7" fill="#8a5b9b" stroke="#222" stroke-width="1.5" stroke-linejoin="round"/><polygon points="1221.6,347.6 1232.0,346.7 1236.6,378.5 1225.7,379.3" fill="#8a5b9b" stroke="#222" stroke-width="1.5" stroke-linejoin="round"/><polygon points="1237.4,369.3 1244.5,368.5 1245.4,378.1 1238.3,378.5" fill="#8a5b9b" stroke="#222" stroke-width="1.5" stroke-linejoin="round"/><polygon points="1008.4,380.6 1019.8,379.8 1021.4,397.5 1009.6,397.5" fill="#8a5b9b" stroke="#222" stroke-width="1.5" stroke-linejoin="round"/><polygon points="1021.0,379.8 1032.0,378.8 1033.5,397.5 1022.5,397.5" fill="#8a5b9b" stroke="#222" stroke-width="1.5" stroke-linejoin="round"/><polygon points="1032.4,378.6 1084.3,371.5 1079.6,397.5 1034.0,397.5" fill="#8a5b9b" stroke="#222" stroke-width="1.5" stroke-linejoin="round"/><polygon points="1090.6,371.5 1100.0,368.5 1111.7,367.2 1127.6,378.5 1121.0,390.0 1127.0,397.5 1085.1,397.5" fill="#8a5b9b" stroke="#222" stroke-width="1.5" stroke-linejoin="round"/><polygon points="1121.3,390.2 1130.5,379.7 1146.4,387.7 1146.4,397.5 1127.6,397.5" fill="#8a5b9b" stroke="#222" stroke-width="1.5" stroke-linejoin="round"/><polygon points="1227.0,382.5 1249.6,381.8 1247.8,392.4 1227.4,393.3" fill="#8a5b9b" stroke="#222" stroke-width="1.5" stroke-linejoin="round"/><polygon points="967.5,392.0 972.0,390.0 972.0,397.5 967.0,397.5" fill="#8a5b9b" stroke="#222" stroke-width="1.5" stroke-linejoin="round"/><polygon points="1006.0,360.9 1017.8,359.3 1019.4,375.5 1007.6,377.0" fill="#262626" stroke="#222" stroke-width="1.5" stroke-linejoin="round"/><polygon points="1030.0,352.3 1037.9,349.5 1040.3,372.3 1032.4,373.5" fill="#262626" stroke="#222" stroke-width="1.5" stroke-linejoin="round"/><polygon points="1051.3,338.9 1056.4,338.5 1056.8,343.2 1051.7,344.4" fill="#262626" stroke="#222" stroke-width="1.5" stroke-linejoin="round"/><polygon points="1059.1,340.0 1064.6,336.9 1071.0,341.6 1060.0,343.2" fill="#262626" stroke="#222" stroke-width="1.5" stroke-linejoin="round"/><polygon points="1060.3,346.4 1075.3,344.8 1089.8,353.8 1089.0,358.9 1061.1,357.0" fill="#262626" stroke="#222" stroke-width="1.5" stroke-linejoin="round"/><polygon points="1074.1,336.5 1078.8,333.0 1089.0,334.5 1090.2,339.3 1079.6,341.2" fill="#262626" stroke="#222" stroke-width="1.5" stroke-linejoin="round"/><polygon points="1092.2,331.8 1113.4,327.9 1114.2,335.0 1093.0,338.5" fill="#262626" stroke="#222" stroke-width="1.5" stroke-linejoin="round"/><polygon points="1116.3,327.5 1122.6,326.3 1123.8,333.0 1117.1,334.2" fill="#262626" stroke="#222" stroke-width="1.5" stroke-linejoin="round"/><polygon points="1084.3,343.2 1091.0,342.0 1092.2,348.7" fill="#262626" stroke="#222" stroke-width="1.5" stroke-linejoin="round"/><polygon points="1093.4,341.5 1115.5,337.5 1118.8,361.8 1112.5,363.0 1095.3,353.0" fill="#262626" stroke="#222" stroke-width="1.5" stroke-linejoin="round"/><polygon points="1118.4,337.1 1139.3,334.2 1141.4,345.1 1119.6,348.4" fill="#262626" stroke="#222" stroke-width="1.5" stroke-linejoin="round"/><polygon points="1120.0,349.2 1141.4,345.9 1143.4,357.2 1121.7,360.9" fill="#262626" stroke="#222" stroke-width="1.5" stroke-linejoin="round"/><polygon points="1123.0,365.1 1144.3,362.6 1147.2,383.5 1135.1,378.5 1123.0,369.3" fill="#262626" stroke="#222" stroke-width="1.5" stroke-linejoin="round"/><polygon points="1166.4,338.0 1178.5,337.1 1179.0,339.2 1166.8,340.5" fill="#262626" stroke="#222" stroke-width="1.5" stroke-linejoin="round"/><polygon points="980.5,384.5 991.9,383.0 993.8,397.5 981.2,397.5" fill="#262626" stroke="#222" stroke-width="1.5" stroke-linejoin="round"/><polygon points="973.0,387.0 978.5,385.5 979.5,397.5 974.0,397.5" fill="#262626" stroke="#222" stroke-width="1.5" stroke-linejoin="round"/><polygon points="994.2,382.5 1004.8,381.4 1007.2,397.5 995.4,397.5" fill="#262626" stroke="#222" stroke-width="1.5" stroke-linejoin="round"/><polygon points="1148.0,387.5 1167.0,385.0 1168.0,397.5 1152.0,397.5" fill="#262626" stroke="#222" stroke-width="1.5" stroke-linejoin="round"/><polygon points="1169.5,384.5 1194.0,383.0 1194.5,397.5 1171.0,397.5" fill="#262626" stroke="#222" stroke-width="1.5" stroke-linejoin="round"/><polygon points="1197.0,383.0 1212.0,382.0 1212.0,397.5 1198.0,397.5" fill="#262626" stroke="#222" stroke-width="1.5" stroke-linejoin="round"/><polygon points="1210.0,383.0 1226.0,382.5 1226.5,392.0 1210.0,393.0" fill="#262626" stroke="#222" stroke-width="1.5" stroke-linejoin="round"/><polygon points="996.0,367.6 1003.7,367.3 1004.7,377.2 992.7,378.5 992.5,373.6 996.4,373.0" fill="#262626" stroke="#222" stroke-width="1.5" stroke-linejoin="round"/><polygon points="988.6,373.0 990.0,372.8 991.5,379.0 989.5,379.2" fill="#262626" stroke="#222" stroke-width="1.5" stroke-linejoin="round"/><polygon points="1168.1,357.6 1192.7,353.8 1194.4,381.0 1170.6,382.2" fill="#262626" stroke="#222" stroke-width="1.5" stroke-linejoin="round"/><polygon points="996.6,370.0 1003.0,369.5 1003.8,376.4 996.6,377.2" fill="#8a5b9b"/><polygon points="1170.2,370.1 1179.4,367.6 1180.2,364.3 1184.4,363.4 1185.2,361.8 1192.3,361.0 1193.5,380.3 1171.0,381.5" fill="#8a5b9b"/><rect x="1182.5" y="363.0" width="1.2" height="17.0" fill="#262626"/><rect x="1185.3" y="363.0" width="1.2" height="17.0" fill="#262626"/><rect x="1188.0" y="363.0" width="1.2" height="17.0" fill="#262626"/><rect x="1190.8" y="363.0" width="1.2" height="17.0" fill="#262626"/><rect x="1171.7" y="372.0" width="1.5" height="9.0" fill="#262626"/><rect x="1175.0" y="372.0" width="1.5" height="9.0" fill="#262626"/><rect x="1178.3" y="372.0" width="1.5" height="9.0" fill="#262626"/><rect x="1095.2" y="330.5" width="2.7" height="6.0" fill="#8a5b9b"/><rect x="1101.2" y="330.5" width="2.7" height="6.0" fill="#8a5b9b"/><rect x="1107.2" y="330.5" width="2.7" height="6.0" fill="#8a5b9b"/><rect x="1118.0" y="327.5" width="1.2" height="5.5" fill="#8a5b9b"/><rect x="1120.8" y="327.5" width="1.2" height="5.5" fill="#8a5b9b"/><rect x="1144.9" y="332.0" width="2.0" height="9.0" fill="#262626"/><rect x="1149.4" y="332.0" width="2.0" height="9.0" fill="#262626"/><rect x="1153.9" y="332.0" width="2.0" height="9.0" fill="#262626"/><rect x="1158.4" y="332.0" width="2.0" height="9.0" fill="#262626"/><rect x="1167.8" y="341.5" width="1.8" height="9.5" fill="#262626"/><rect x="1171.8" y="341.5" width="1.8" height="9.5" fill="#262626"/><rect x="1175.8" y="341.5" width="1.8" height="9.5" fill="#262626"/><rect x="1179.8" y="341.5" width="1.8" height="9.5" fill="#262626"/><rect x="1183.8" y="341.5" width="1.8" height="9.5" fill="#262626"/><rect x="1187.8" y="341.5" width="1.8" height="9.5" fill="#262626"/><rect x="1121.8" y="350.5" width="1.9" height="9.0" fill="#8a5b9b"/><rect x="1126.0" y="350.5" width="1.9" height="9.0" fill="#8a5b9b"/><rect x="1130.2" y="350.5" width="1.9" height="9.0" fill="#8a5b9b"/><rect x="1134.4" y="350.5" width="1.9" height="9.0" fill="#8a5b9b"/><rect x="1138.6" y="350.5" width="1.9" height="9.0" fill="#8a5b9b"/><rect x="1148.9" y="371.0" width="2.0" height="11.0" fill="#262626"/><rect x="1153.4" y="371.0" width="2.0" height="11.0" fill="#262626"/><rect x="1157.9" y="371.0" width="2.0" height="11.0" fill="#262626"/><rect x="1162.4" y="371.0" width="2.0" height="11.0" fill="#262626"/><rect x="1172.8" y="386.0" width="1.9" height="10.0" fill="#8a5b9b"/><rect x="1177.0" y="386.0" width="1.9" height="10.0" fill="#8a5b9b"/><rect x="1181.2" y="386.0" width="1.9" height="10.0" fill="#8a5b9b"/><rect x="1185.4" y="386.0" width="1.9" height="10.0" fill="#8a5b9b"/><rect x="1189.6" y="386.0" width="1.9" height="10.0" fill="#8a5b9b"/><rect x="983.0" y="386.0" width="2.2" height="10.0" fill="#8a5b9b"/><rect x="988.0" y="386.0" width="2.2" height="10.0" fill="#8a5b9b"/><rect x="996.9" y="384.0" width="2.0" height="12.0" fill="#8a5b9b"/><rect x="1001.4" y="384.0" width="2.0" height="12.0" fill="#8a5b9b"/><rect x="1213.8" y="384.0" width="1.8" height="8.0" fill="#8a5b9b"/><rect x="1217.8" y="384.0" width="1.8" height="8.0" fill="#8a5b9b"/><rect x="1221.8" y="384.0" width="1.8" height="8.0" fill="#8a5b9b"/><rect x="1151.1" y="389.0" width="2.4" height="7.0" fill="#8a5b9b"/><rect x="1156.4" y="389.0" width="2.4" height="7.0" fill="#8a5b9b"/><rect x="1161.7" y="389.0" width="2.4" height="7.0" fill="#8a5b9b"/><polygon points="1125.9,388.5 1128.8,385.5 1142.0,392.5 1139.5,396.0" fill="#262626" stroke="#222" stroke-width="1.5" stroke-linejoin="round"/><polyline points="1068.5,359.0 1070.0,368.5" fill="none" stroke="#222" stroke-width="1.3" stroke-linejoin="round" stroke-linecap="round"/><polyline points="1074.0,358.6 1075.5,368.0" fill="none" stroke="#222" stroke-width="1.3" stroke-linejoin="round" stroke-linecap="round"/><rect x="1127.8" y="366.0" width="1.8" height="9.5" fill="#8a5b9b"/><rect x="1131.8" y="366.0" width="1.8" height="9.5" fill="#8a5b9b"/><rect x="1135.8" y="366.0" width="1.8" height="9.5" fill="#8a5b9b"/><rect x="1139.8" y="366.0" width="1.8" height="9.5" fill="#8a5b9b"/><polygon points="1128.0,340.0 1139.0,338.5 1140.0,345.0 1133.0,346.0 1132.0,343.0 1128.0,344.0" fill="#8a5b9b"/><polyline points="1042.0,360.0 1050.0,359.0 1050.0,348.0" fill="none" stroke="#222" stroke-width="1.1" stroke-linejoin="round" stroke-linecap="round"/><polyline points="1225.0,366.0 1236.0,365.0" fill="none" stroke="#222" stroke-width="1.1" stroke-linejoin="round" stroke-linecap="round"/><polyline points="1199.0,365.0 1208.0,364.0" fill="none" stroke="#222" stroke-width="1.1" stroke-linejoin="round" stroke-linecap="round"/><polygon points="1210.6,393.5 1225.0,394.2 1226.5,403.5 1210.6,402.5" fill="#8a5b9b" stroke="#222" stroke-width="1.5" stroke-linejoin="round"/><polygon points="1228.3,394.2 1247.8,395.0 1246.0,407.4 1229.2,405.7" fill="#8a5b9b" stroke="#222" stroke-width="1.5" stroke-linejoin="round"/><polygon points="1210.6,404.5 1224.8,405.5 1223.0,418.0 1210.6,415.4" fill="#8a5b9b" stroke="#222" stroke-width="1.5" stroke-linejoin="round"/><polygon points="1227.4,411.0 1245.1,412.7 1243.4,424.2 1226.5,422.5" fill="#8a5b9b" stroke="#222" stroke-width="1.5" stroke-linejoin="round"/><polygon points="1210.6,420.0 1222.0,422.0 1220.0,433.0 1210.6,430.0" fill="#8a5b9b" stroke="#222" stroke-width="1.5" stroke-linejoin="round"/><polygon points="1226.5,425.1 1243.4,426.0 1241.6,442.8 1224.8,439.3" fill="#8a5b9b" stroke="#222" stroke-width="1.5" stroke-linejoin="round"/><polygon points="1210.6,435.0 1219.0,436.0 1218.0,446.0 1210.6,446.0" fill="#8a5b9b" stroke="#222" stroke-width="1.5" stroke-linejoin="round"/><polygon points="1266.4,438.4 1299.1,442.8 1296.5,457.9 1265.5,454.3" fill="#8a5b9b" stroke="#222" stroke-width="1.5" stroke-linejoin="round"/><polygon points="1301.8,442.8 1316.0,444.6 1313.3,460.5 1298.5,458.2" fill="#8a5b9b" stroke="#222" stroke-width="1.5" stroke-linejoin="round"/><polygon points="1221.2,456.1 1258.4,461.4 1255.8,488.0 1220.4,483.5" fill="#8a5b9b" stroke="#222" stroke-width="1.5" stroke-linejoin="round"/><polygon points="1210.6,454.0 1217.0,455.0 1216.0,470.0 1210.6,470.0" fill="#8a5b9b" stroke="#222" stroke-width="1.5" stroke-linejoin="round"/><polygon points="1210.6,473.0 1216.0,473.0 1215.0,484.0 1210.6,484.0" fill="#8a5b9b" stroke="#222" stroke-width="1.5" stroke-linejoin="round"/><polygon points="1262.0,461.4 1289.4,464.1 1288.5,476.5 1262.8,475.6" fill="#8a5b9b" stroke="#222" stroke-width="1.5" stroke-linejoin="round"/><polygon points="1262.0,477.3 1287.6,479.1 1286.7,491.5 1261.0,488.0" fill="#8a5b9b" stroke="#222" stroke-width="1.5" stroke-linejoin="round"/><polygon points="1293.0,465.0 1312.4,467.6 1311.5,480.0 1292.0,478.2" fill="#8a5b9b" stroke="#222" stroke-width="1.5" stroke-linejoin="round"/><polygon points="1291.2,480.9 1321.2,485.3 1319.5,496.8 1289.4,492.4" fill="#8a5b9b" stroke="#222" stroke-width="1.5" stroke-linejoin="round"/><polygon points="1219.5,489.7 1253.1,493.3 1251.3,521.6 1216.8,517.2" fill="#8a5b9b" stroke="#222" stroke-width="1.5" stroke-linejoin="round"/><polygon points="1210.6,488.0 1215.0,488.5 1213.0,515.0 1210.6,515.0" fill="#8a5b9b" stroke="#222" stroke-width="1.5" stroke-linejoin="round"/><polygon points="1258.4,495.0 1288.5,496.8 1287.6,526.9 1256.6,525.1" fill="#8a5b9b" stroke="#222" stroke-width="1.5" stroke-linejoin="round"/><polygon points="1294.7,498.6 1318.6,501.2 1316.0,530.4 1292.0,527.8" fill="#8a5b9b" stroke="#222" stroke-width="1.5" stroke-linejoin="round"/><polyline points="1208.0,411.0 1226.0,430.0 1243.0,450.0" fill="none" stroke="#222" stroke-width="6.4" stroke-linejoin="round" stroke-linecap="butt"/><polyline points="1208.0,411.0 1226.0,430.0 1243.0,450.0" fill="none" stroke="#fff" stroke-width="4" stroke-linejoin="round" stroke-linecap="square"/><polyline points="1267.0,448.0 1297.0,451.0" fill="none" stroke="#222" stroke-width="1.1" stroke-linejoin="round" stroke-linecap="round"/><polyline points="1263.0,470.0 1288.0,472.0" fill="none" stroke="#222" stroke-width="1.1" stroke-linejoin="round" stroke-linecap="round"/><polyline points="1226.0,458.0 1224.0,471.0 1254.0,476.0" fill="none" stroke="#222" stroke-width="1.1" stroke-linejoin="round" stroke-linecap="round"/><polyline points="1220.0,505.0 1252.0,508.0" fill="none" stroke="#222" stroke-width="1.1" stroke-linejoin="round" stroke-linecap="round"/><polyline points="1272.0,496.0 1270.0,525.0" fill="none" stroke="#222" stroke-width="1.1" stroke-linejoin="round" stroke-linecap="round"/><polyline points="1294.0,512.0 1318.0,515.0" fill="none" stroke="#222" stroke-width="1.1" stroke-linejoin="round" stroke-linecap="round"/><polyline points="1293.0,520.0 1317.0,523.0" fill="none" stroke="#222" stroke-width="1.1" stroke-linejoin="round" stroke-linecap="round"/><polyline points="1304.0,521.0 1303.0,529.0" fill="none" stroke="#222" stroke-width="1.1" stroke-linejoin="round" stroke-linecap="round"/><polyline points="1226.0,491.0 1225.0,504.0" fill="none" stroke="#222" stroke-width="1.1" stroke-linejoin="round" stroke-linecap="round"/><polyline points="1304.0,435.0 1298.0,460.0 1292.0,490.0 1289.0,520.0 1286.0,520.0" fill="none" stroke="#222" stroke-width="3.2" stroke-linejoin="round"/><polyline points="1304.0,435.0 1298.0,460.0 1292.0,490.0 1289.0,520.0 1286.0,520.0" fill="none" stroke="#8a5b9b" stroke-width="1.0" stroke-linejoin="round"/><polyline points="1257.0,494.0 1255.0,520.0 1253.5,520.0" fill="none" stroke="#222" stroke-width="3.2" stroke-linejoin="round"/><polyline points="1257.0,494.0 1255.0,520.0 1253.5,520.0" fill="none" stroke="#8a5b9b" stroke-width="1.0" stroke-linejoin="round"/><polygon points="1030.0,584.0 1000.0,540.0 1210.0,522.0 1317.7,535.8 1343.9,539.1 1364.9,541.6 1360.0,555.0 1353.0,569.7 1345.0,583.0 1335.7,595.7 1323.0,610.0 1309.7,623.8 1296.0,637.0 1281.6,649.7 1281.5,653.7 1266.4,666.1 1263.6,674.4 1248.0,690.0 1232.0,707.4 1220.0,721.0 1207.2,735.0 1193.4,728.0 1180.0,718.0 1175.0,720.4 1164.0,736.0 1140.0,770.0 1123.0,768.0 1101.0,758.6 1097.2,751.4 1077.6,743.1 1052.8,729.7 1032.1,727.6 1007.4,732.8 986.7,747.3 977.4,762.7 975.4,779.9 907.2,775.1 912.4,767.9 915.5,759.6 917.6,745.2 960.9,718.3 959.9,685.3 952.7,675.0 960.9,662.6 943.0,640.0 957.7,621.0 990.7,602.6 1022.0,588.5" fill="#8a5b9b" stroke="#222" stroke-width="1.5" stroke-linejoin="round"/><polygon points="926.0,590.3 946.7,589.3 947.5,616.0 927.5,617.0" fill="#262626" stroke="#222" stroke-width="1.5" stroke-linejoin="round"/><polygon points="951.3,589.0 967.2,588.0 967.8,614.0 952.0,615.0" fill="#262626" stroke="#222" stroke-width="1.5" stroke-linejoin="round"/><polygon points="970.8,588.3 978.7,588.0 979.0,609.0 971.3,609.5" fill="#262626" stroke="#222" stroke-width="1.5" stroke-linejoin="round"/><polygon points="979.5,588.0 1019.8,586.5 980.0,604.5" fill="#8a5b9b" stroke="#222" stroke-width="1.5" stroke-linejoin="round"/><polygon points="937.0,620.0 948.5,619.5 949.0,627.0 942.0,634.5 937.5,632.0" fill="#8a5b9b" stroke="#222" stroke-width="1.5" stroke-linejoin="round"/><polyline points="939.5,621.0 940.0,627.0 948.0,626.5" fill="none" stroke="#222" stroke-width="1.1" stroke-linejoin="round" stroke-linecap="round"/><rect x="938" y="596.5" width="8.5" height="3" fill="#8a5b9b"/><rect x="938" y="601.5" width="8.5" height="3" fill="#8a5b9b"/><rect x="938" y="606.5" width="8.5" height="3" fill="#8a5b9b"/><rect x="928.5" y="613" width="9" height="1.6" fill="#8a5b9b"/><polyline points="962.0,718.0 990.0,702.0 1040.0,688.7 1077.0,685.2 1102.0,681.8 1136.4,675.0 1170.8,657.0 1199.7,635.0 1219.0,614.4 1240.0,593.8 1262.0,574.0 1290.0,556.0 1309.7,540.0 1329.2,538.4" fill="none" stroke="#222" stroke-width="3.0" stroke-linejoin="round"/><polyline points="962.0,718.0 990.0,702.0 1040.0,688.7 1077.0,685.2 1102.0,681.8 1136.4,675.0 1170.8,657.0 1199.7,635.0 1219.0,614.4 1240.0,593.8 1262.0,574.0 1290.0,556.0 1309.7,540.0 1329.2,538.4" fill="none" stroke="#8a5b9b" stroke-width="0.7999999999999998" stroke-linejoin="round"/><polyline points="964.0,716.0 992.0,700.0 1030.0,686.4 1077.6,683.3 1120.0,678.0 1150.0,672.0 1177.7,651.5 1208.0,636.4 1240.0,618.5 1281.6,600.0 1318.4,574.0 1335.7,538.4" fill="none" stroke="#222" stroke-width="1.1" stroke-linejoin="round" stroke-linecap="round"/><polyline points="1135.0,691.4 1172.0,669.4" fill="none" stroke="#222" stroke-width="1.1" stroke-linejoin="round" stroke-linecap="round"/><polyline points="1172.0,669.4 1164.6,684.7 1166.0,700.0 1177.7,717.5" fill="none" stroke="#222" stroke-width="1.1" stroke-linejoin="round" stroke-linecap="round"/><polyline points="1135.0,691.4 1160.0,705.0 1177.7,717.5" fill="none" stroke="#222" stroke-width="1.1" stroke-linejoin="round" stroke-linecap="round"/><polyline points="1040.0,701.0 1075.0,699.0 1110.0,697.0 1135.0,698.4 1160.0,708.0 1176.0,717.0" fill="none" stroke="#222" stroke-width="1.1" stroke-linejoin="round" stroke-linecap="round"/><polyline points="1046.6,701.8 1070.0,712.0 1093.0,722.5" fill="none" stroke="#222" stroke-width="1.1" stroke-linejoin="round" stroke-linecap="round"/><polyline points="949.6,775.0 951.0,760.0 957.8,745.2 968.0,724.5 993.0,710.0 1024.0,702.9 1044.5,701.8" fill="none" stroke="#222" stroke-width="1.1" stroke-linejoin="round" stroke-linecap="round"/><polyline points="1353.0,540.5 1344.3,567.6 1322.7,595.7 1296.8,621.6 1275.1,643.2" fill="none" stroke="#222" stroke-width="1.1" stroke-linejoin="round" stroke-linecap="round"/><polyline points="1253.5,520.0 1252.0,548.0 1249.2,574.0 1240.0,593.8" fill="none" stroke="#222" stroke-width="3.2" stroke-linejoin="round"/><polyline points="1253.5,520.0 1252.0,548.0 1249.2,574.0 1240.0,593.8" fill="none" stroke="#8a5b9b" stroke-width="1.0" stroke-linejoin="round"/><polyline points="1286.0,520.0 1279.5,541.6 1262.0,562.0 1251.4,576.2 1240.0,593.8" fill="none" stroke="#222" stroke-width="3.2" stroke-linejoin="round"/><polyline points="1286.0,520.0 1279.5,541.6 1262.0,562.0 1251.4,576.2 1240.0,593.8" fill="none" stroke="#8a5b9b" stroke-width="1.0" stroke-linejoin="round"/><polyline points="1026.0,588.0 1034.0,610.0 1037.0,630.0 1042.0,650.0 1048.0,690.0" fill="none" stroke="#222" stroke-width="1.1" stroke-linejoin="round" stroke-linecap="round"/><polyline points="1060.0,682.0 1066.0,700.0 1072.0,709.0" fill="none" stroke="#222" stroke-width="1.1" stroke-linejoin="round" stroke-linecap="round"/><polyline points="1099.0,665.0 1107.5,682.0" fill="none" stroke="#222" stroke-width="1.1" stroke-linejoin="round" stroke-linecap="round"/><polyline points="1118.5,653.0 1132.0,675.0" fill="none" stroke="#222" stroke-width="1.1" stroke-linejoin="round" stroke-linecap="round"/><polyline points="1157.0,628.0 1172.0,651.5" fill="none" stroke="#222" stroke-width="1.1" stroke-linejoin="round" stroke-linecap="round"/><polyline points="1206.0,636.8 1230.0,625.0 1270.0,605.0 1300.0,585.0 1325.0,560.0 1337.0,540.0" fill="none" stroke="#222" stroke-width="1.1" stroke-linejoin="round" stroke-linecap="round"/><polyline points="1341.0,537.0 1336.0,552.0 1328.0,566.0 1316.0,581.0 1300.0,596.0 1287.0,606.9 1258.1,631.7 1241.6,648.2 1225.1,664.7 1211.3,679.9 1194.8,699.1 1181.0,714.3 1177.0,719.0" fill="none" stroke="#222" stroke-width="8.4" stroke-linejoin="round" stroke-linecap="butt"/><polyline points="1341.0,537.0 1336.0,552.0 1328.0,566.0 1316.0,581.0 1300.0,596.0 1287.0,606.9 1258.1,631.7 1241.6,648.2 1225.1,664.7 1211.3,679.9 1194.8,699.1 1181.0,714.3 1177.0,719.0" fill="none" stroke="#fff" stroke-width="6" stroke-linejoin="round" stroke-linecap="square"/><polyline points="1243.0,651.0 1259.0,635.0" fill="none" stroke="#222" stroke-width="2" stroke-linejoin="round" stroke-linecap="round"/><polyline points="1335.0,540.0 1342.0,538.0" fill="none" stroke="#222" stroke-width="5.4" stroke-linejoin="round" stroke-linecap="butt"/><polyline points="1335.0,540.0 1342.0,538.0" fill="none" stroke="#fff" stroke-width="3" stroke-linejoin="round" stroke-linecap="square"/><polyline points="1190.0,575.0 1203.3,586.2 1280.0,649.0 1283.0,652.0" fill="none" stroke="#222" stroke-width="7.4" stroke-linejoin="round" stroke-linecap="butt"/><polyline points="1190.0,575.0 1203.3,586.2 1280.0,649.0 1283.0,652.0" fill="none" stroke="#fff" stroke-width="5" stroke-linejoin="round" stroke-linecap="square"/><polyline points="1168.7,586.0 1170.8,605.7 1182.0,620.0 1190.3,627.3 1196.0,630.0 1207.0,617.0 1220.0,602.0" fill="none" stroke="#222" stroke-width="6.4" stroke-linejoin="round" stroke-linecap="butt"/><polyline points="1168.7,586.0 1170.8,605.7 1182.0,620.0 1190.3,627.3 1196.0,630.0 1207.0,617.0 1220.0,602.0" fill="none" stroke="#fff" stroke-width="4" stroke-linejoin="round" stroke-linecap="square"/><polyline points="1032.0,583.5 1020.3,588.5 990.7,602.0 957.7,620.0 942.5,639.5" fill="none" stroke="#222" stroke-width="5.4" stroke-linejoin="round" stroke-linecap="butt"/><polyline points="1032.0,583.5 1020.3,588.5 990.7,602.0 957.7,620.0 942.5,639.5" fill="none" stroke="#fff" stroke-width="3" stroke-linejoin="round" stroke-linecap="square"/><polyline points="1046.0,585.0 1048.7,587.2 1058.0,598.0 1066.0,616.0 1071.4,642.0 1074.0,665.0 1077.0,686.0" fill="none" stroke="#222" stroke-width="7.4" stroke-linejoin="round" stroke-linecap="butt"/><polyline points="1046.0,585.0 1048.7,587.2 1058.0,598.0 1066.0,616.0 1071.4,642.0 1074.0,665.0 1077.0,686.0" fill="none" stroke="#fff" stroke-width="5" stroke-linejoin="round" stroke-linecap="square"/><polyline points="1077.6,670.9 1100.0,660.0 1130.0,643.0 1160.0,624.0 1166.4,619.2 1168.4,596.5 1170.5,586.0" fill="none" stroke="#222" stroke-width="7.4" stroke-linejoin="round" stroke-linecap="butt"/><polyline points="1077.6,670.9 1100.0,660.0 1130.0,643.0 1160.0,624.0 1166.4,619.2 1168.4,596.5 1170.5,586.0" fill="none" stroke="#fff" stroke-width="5" stroke-linejoin="round" stroke-linecap="square"/><polyline points="1081.7,699.8 1095.0,708.0 1110.6,716.3 1106.5,736.9 1099.3,757.0" fill="none" stroke="#222" stroke-width="6.4" stroke-linejoin="round" stroke-linecap="butt"/><polyline points="1081.7,699.8 1095.0,708.0 1110.6,716.3 1106.5,736.9 1099.3,757.0" fill="none" stroke="#fff" stroke-width="4" stroke-linejoin="round" stroke-linecap="square"/><polyline points="1110.6,720.4 1140.0,728.0 1164.3,734.9" fill="none" stroke="#222" stroke-width="6.4" stroke-linejoin="round" stroke-linecap="butt"/><polyline points="1110.6,720.4 1140.0,728.0 1164.3,734.9" fill="none" stroke="#fff" stroke-width="4" stroke-linejoin="round" stroke-linecap="square"/><polyline points="1205.0,520.0 1317.0,535.0" fill="none" stroke="#222" stroke-width="6.9" stroke-linejoin="round" stroke-linecap="butt"/><polyline points="1205.0,520.0 1317.0,535.0" fill="none" stroke="#fff" stroke-width="4.5" stroke-linejoin="round" stroke-linecap="square"/><polygon points="1084.7,613.0 1105.4,600.6 1108.8,606.8 1088.2,619.9" fill="#8a5b9b" stroke="#222" stroke-width="1.5" stroke-linejoin="round"/><polygon points="1110.9,586.9 1125.3,587.6 1124.7,593.8 1110.9,592.4" fill="#8a5b9b" stroke="#222" stroke-width="1.5" stroke-linejoin="round"/><polygon points="1126.0,587.6 1140.5,590.3 1139.1,596.5 1126.0,593.8" fill="#8a5b9b" stroke="#222" stroke-width="1.5" stroke-linejoin="round"/><polygon points="1117.8,606.8 1130.8,597.9 1135.0,602.7 1122.6,612.3" fill="#8a5b9b" stroke="#222" stroke-width="1.5" stroke-linejoin="round"/><polygon points="1088.0,626.0 1100.0,620.0 1110.0,631.0 1097.0,638.0" fill="#8a5b9b" stroke="#222" stroke-width="1.5" stroke-linejoin="round"/><polygon points="1100.0,620.0 1114.0,611.0 1120.0,620.0 1110.0,631.0" fill="#8a5b9b" stroke="#222" stroke-width="1.5" stroke-linejoin="round"/><polygon points="1112.0,633.0 1123.0,623.0 1130.0,632.0 1118.0,640.0" fill="#8a5b9b" stroke="#222" stroke-width="1.5" stroke-linejoin="round"/><polygon points="1126.0,622.0 1138.0,614.0 1144.0,622.0 1132.0,630.0" fill="#8a5b9b" stroke="#222" stroke-width="1.5" stroke-linejoin="round"/><polygon points="1074.0,632.0 1086.0,626.0 1090.0,636.0 1084.0,644.0 1077.0,646.0" fill="#8a5b9b" stroke="#222" stroke-width="1.5" stroke-linejoin="round"/><polyline points="1128.0,596.5 1150.0,625.4" fill="none" stroke="#222" stroke-width="1.1" stroke-linejoin="round" stroke-linecap="round"/><polyline points="1170.0,592.0 1185.0,588.0 1195.0,600.0" fill="none" stroke="#222" stroke-width="1.1" stroke-linejoin="round" stroke-linecap="round"/><polyline points="1210.0,590.0 1222.0,585.0" fill="none" stroke="#222" stroke-width="1.1" stroke-linejoin="round" stroke-linecap="round"/></svg><div style="position:absolute;left:709px;top:396px;width:501px;height:190px;box-shadow:0 2px 18px rgba(0,0,0,0.28)"></div><div style="position:absolute;left:709px;top:396px;width:501px;height:190px;background:#fff;border:1px solid #9a9a9a;box-sizing:border-box"></div><svg style="position:absolute;left:721px;top:406px" width="23" height="23" viewBox="0 0 24 24"><defs><linearGradient id="qg" x1="0" y1="0" x2="0" y2="1"><stop offset="0" stop-color="#8db62a"/><stop offset="1" stop-color="#5c9a2c"/></linearGradient></defs><circle cx="11.7" cy="11.75" r="9.1" fill="none" stroke="url(#qg)" stroke-width="4.6"/><path d="M17.27 13.23L24.77 20.73L21.23 24.27L13.73 16.77z" fill="#6aa83c" stroke="#fff" stroke-width="1"/><path d="M17.27 13.23L24.77 20.73L21.23 24.27L13.73 16.77z" fill="#6aa83c"/><path d="M10.5 10L16.02 11.98L12.48 15.52z M16.02 11.98L17.5 13.2L13.8 16.9L12.48 15.52z" fill="#f07a1c"/><path d="M15.3 12.7L16.6 14L13.4 17.2L12.1 15.9z" fill="#f3e23c"/></svg><div class="t" style="left:750px;top:411.45px;font-size:17.9px;line-height:17.9px;color:#9a9a9a;">Stop Editing</div><svg style="position:absolute;left:1177px;top:410px" width="17" height="17" viewBox="0 0 17 17"><path d="M1 1l15 15M16 1L1 16" stroke="#888" stroke-width="1.1"/></svg><svg style="position:absolute;left:728px;top:459px" width="45" height="45" viewBox="0 0 45 45"><circle cx="22.5" cy="22.5" r="21.3" fill="#0a64c0" stroke="#0d3f7a" stroke-width="1.2"/><text x="22.5" y="36.5" text-anchor="middle" font-family="Liberation Sans" font-weight="bold" font-size="32" fill="#fff">?</text></svg><div class="t" style="left:799px;top:463.29px;font-size:17.85px;line-height:17.85px;color:#000;">Do you want to save the changes to layer</div><div class="t" style="left:799px;top:487.62px;font-size:17.1px;line-height:17.1px;color:#000;">landuse_interest?</div><div style="position:absolute;left:710px;top:525px;width:499px;height:60px;background:#f0f0f0;border-top:1px solid #dfdfdf"></div><div style="position:absolute;left:841px;top:535px;width:109.5px;height:34px;background:#e1e1e1;border:1px solid #adadad;box-sizing:border-box"></div><div class="t" style="left:841.0px;width:109.5px;text-align:center;top:546.75px;font-size:16.6px;line-height:16.6px;color:#000;">Save</div><div style="position:absolute;left:962px;top:535px;width:109.5px;height:34px;background:#e1e1e1;border:1px solid #adadad;box-sizing:border-box"></div><div class="t" style="left:962.0px;width:109.5px;text-align:center;top:546.75px;font-size:16.6px;line-height:16.6px;color:#000;">Discard</div><div style="position:absolute;left:1083px;top:535px;width:110px;height:34px;background:#e1e1e1;border:1px solid #adadad;box-sizing:border-box"></div><div class="t" style="left:1083.0px;width:110px;text-align:center;top:546.75px;font-size:16.6px;line-height:16.6px;color:#000;">Cancel</div><div class="t" style="left:887.6px;top:995.11px;font-size:15.35px;line-height:15.35px;color:#000;">Coordinate</div><div style="position:absolute;left:967px;top:988px;width:114px;height:25px;background:#fff;border:1px solid #7a7a7a;box-sizing:border-box"></div><div class="t" style="left:970.5px;top:994.89px;font-size:15.6px;line-height:15.6px;color:#000;">814758,73474</div><svg style="position:absolute;left:1084px;top:989px" width="24" height="24" viewBox="0 0 24 24"><ellipse cx="11" cy="13" rx="7" ry="9" fill="#ddd" stroke="#222" stroke-width="1.6" transform="rotate(-30 11 13)"/><circle cx="13" cy="16" r="2.5" fill="none" stroke="#222" stroke-width="1.3"/><path d="M7 5l3 5" stroke="#222" stroke-width="2"/><path d="M18 3l1-1M21 6l1-1M20 10h2" stroke="#222" stroke-width="1"/></svg><div class="t" style="left:1121px;top:995.06px;font-size:15.4px;line-height:15.4px;color:#000;">Scale</div><div style="position:absolute;left:1160px;top:988px;width:113px;height:25px;background:#fff;border:1px solid #7a7a7a;box-sizing:border-box"></div><div class="t" style="left:1164px;top:994.89px;font-size:15.6px;line-height:15.6px;color:#000;">1:28388</div><svg style="position:absolute;left:1251px;top:995px" width="14" height="10" viewBox="0 0 14 10"><path d="M1 2l6 6 6-6" fill="none" stroke="#444" stroke-width="1.2"/></svg><svg style="position:absolute;left:1284px;top:989px" width="20" height="24" viewBox="0 0 20 24"><path d="M5 11V7a5 5 0 0 1 10 0v4" fill="none" stroke="#777" stroke-width="2.4"/><rect x="2" y="11" width="16" height="12" rx="1.5" fill="#777"/></svg><div class="t" style="left:1313px;top:995.06px;font-size:15.4px;line-height:15.4px;color:#000;">Magnifier</div><div style="position:absolute;left:1381px;top:988px;width:96px;height:25px;background:#fff;border:1px solid #7a7a7a;box-sizing:border-box"></div><div class="t" style="left:1385px;top:994.89px;font-size:15.6px;line-height:15.6px;color:#000;">100%</div><div style="position:absolute;left:1461px;top:990px;width:14px;height:21px;background:#f0f0f0;border:1px solid #ddd;box-sizing:border-box"></div><svg style="position:absolute;left:1461px;top:990px" width="14" height="21" viewBox="0 0 14 21"><path d="M3 8l4-4 4 4zM3 13l4 4 4-4z" fill="#222"/></svg><div class="t" style="left:1487px;top:995.06px;font-size:15.4px;line-height:15.4px;color:#000;">Rotation</div><div style="position:absolute;left:1555px;top:988px;width:95px;height:25px;background:#fff;border:1px solid #7a7a7a;box-sizing:border-box"></div><div class="t" style="left:1559px;top:994.89px;font-size:15.6px;line-height:15.6px;color:#000;">0.0 °</div><div style="position:absolute;left:1634px;top:990px;width:14px;height:21px;background:#f0f0f0;border:1px solid #ddd;box-sizing:border-box"></div><svg style="position:absolute;left:1634px;top:990px" width="14" height="21" viewBox="0 0 14 21"><path d="M3 8l4-4 4 4zM3 13l4 4 4-4z" fill="#222"/></svg><div style="position:absolute;left:1656px;top:990px;width:20px;height:20px;background:#fff;border:1px solid #333;box-sizing:border-box"></div><svg style="position:absolute;left:1656px;top:990px" width="20" height="20" viewBox="0 0 20 20"><path d="M4.5 10l4 4 7-8" fill="none" stroke="#222" stroke-width="1.4"/></svg><div class="t" style="left:1684.5px;top:995.06px;font-size:15.4px;line-height:15.4px;color:#000;">Render</div><svg style="position:absolute;left:1751px;top:990px" width="24" height="22" viewBox="0 0 24 22"><ellipse cx="12" cy="11" rx="10" ry="9" fill="none" stroke="#777" stroke-width="1.4"/><path d="M2 11h20M12 2v18M4 6h16M4 16h16" stroke="#777" stroke-width="1.1"/><ellipse cx="12" cy="11" rx="5" ry="9" fill="none" stroke="#777" stroke-width="1.1"/></svg><div class="t" style="left:1779px;top:995.23px;font-size:15.2px;line-height:15.2px;color:#000;">EPSG:32129</div><svg style="position:absolute;left:1887px;top:988px" width="28" height="26" viewBox="0 0 28 26"><path d="M14 2c7 0 12 4 12 9s-5 9-12 9l-2 0-6 4 1-5c-3-2-5-5-5-8 0-5 5-9 12-9z" fill="#555"/><circle cx="8" cy="11" r="1.8" fill="#fff"/><circle cx="14" cy="11" r="1.8" fill="#fff"/><circle cx="20" cy="11" r="1.8" fill="#fff"/></svg>
</body></html>
